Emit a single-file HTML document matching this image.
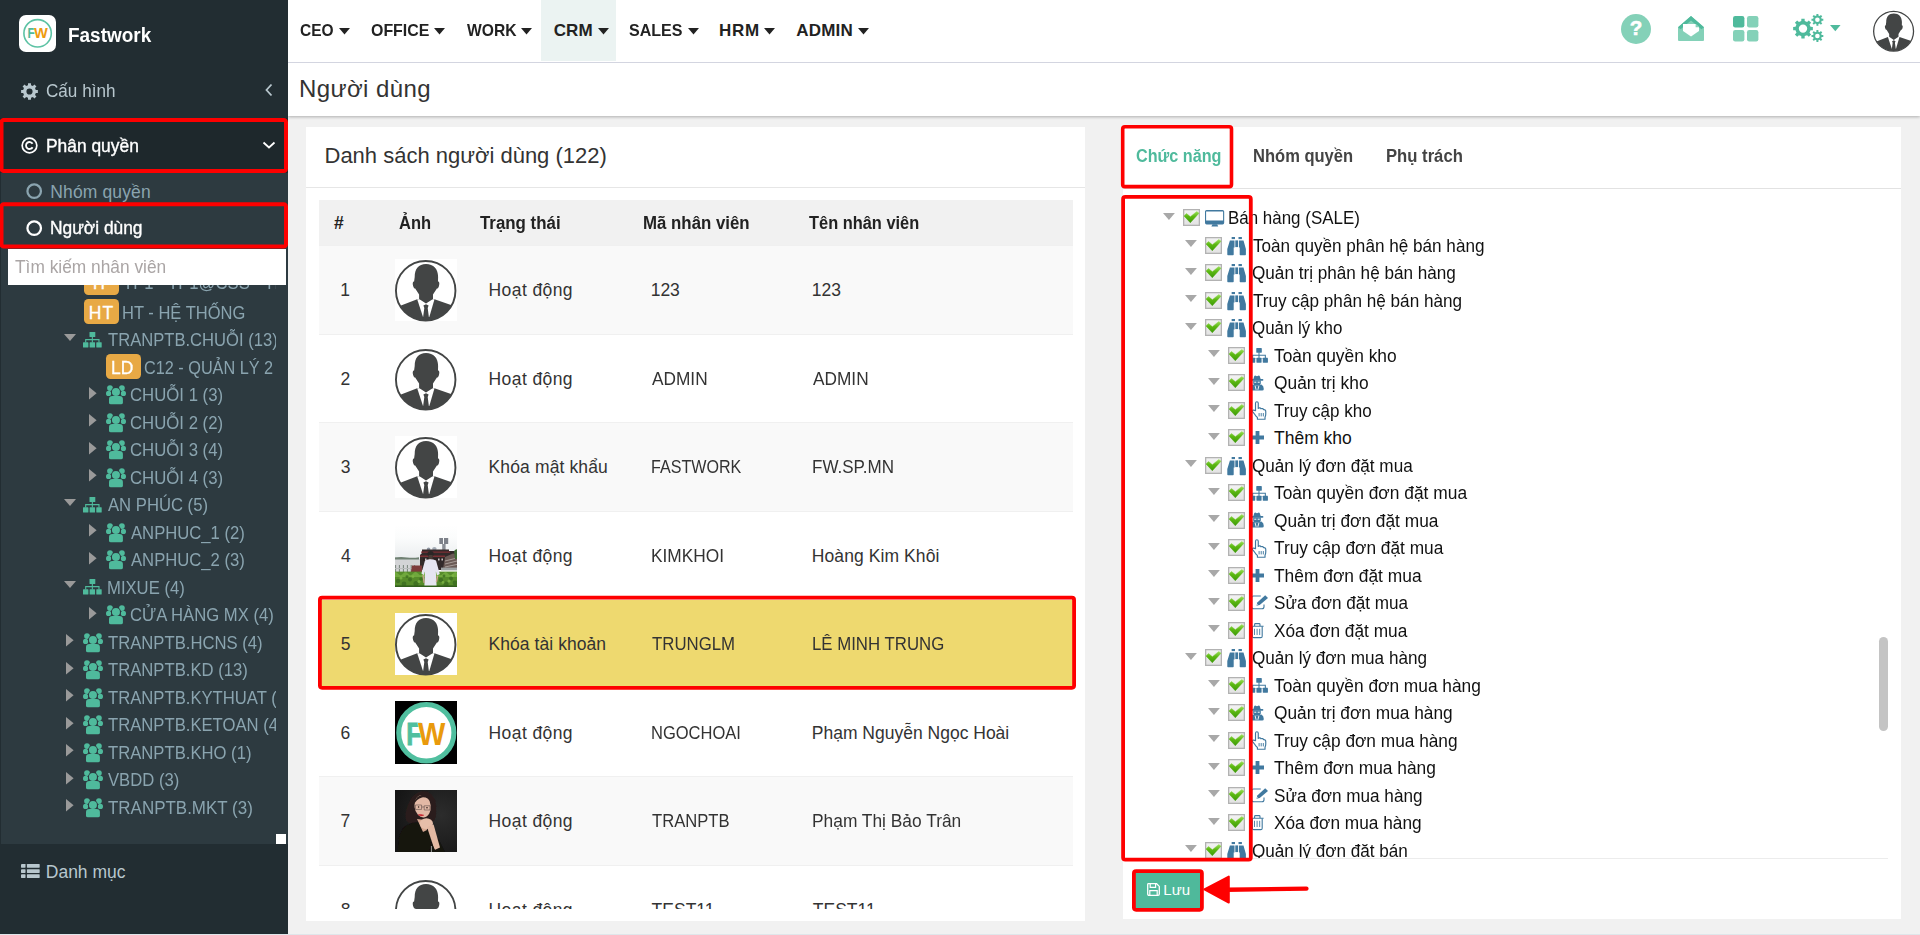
<!DOCTYPE html>
<html lang="vi"><head><meta charset="utf-8"><title>Người dùng</title>
<style>
html,body{margin:0;padding:0}
body{width:1920px;height:935px;overflow:hidden;position:relative;background:#f1f1f1;font-family:"Liberation Sans",sans-serif;font-size:17.5px;color:#333}
.t{position:absolute;white-space:nowrap;line-height:1;display:block}
.b{position:absolute;display:block}
svg{display:block;overflow:visible}
.badge{position:absolute;width:35px;height:25px;border-radius:4.5px;background:#e8a945}
.clip{position:absolute;overflow:hidden}
</style></head><body>

<div class="b" style="left:288px;top:62px;width:1632px;height:54px;background:#fff;box-shadow:0 1px 3px rgba(0,0,0,.28)"></div>
<div class="b" style="left:288px;top:0;width:1632px;height:62px;background:#fff"></div>
<div class="b" style="left:288px;top:62px;width:1632px;height:1px;background:#d3d5e0"></div>
<div class="b" style="left:541px;top:0;width:75px;height:61px;background:#ebf3f2"></div>
<div class="b" style="left:0;top:933.5px;width:1920px;height:2px;background:#dfe6ea"></div>
<span class="t" style="left:300.36px;top:22px;font-size:17px;font-weight:700;color:#222;transform:scaleX(0.9115);transform-origin:0 0;">CEO</span>
<svg style="position:absolute;left:338.8px;top:27.6px;" width="11" height="6.4" viewBox="0 0 11 6.4"><path d="M0,0 H11 L5.5,6.4Z" fill="#222"/></svg>
<span class="t" style="left:371.05px;top:22px;font-size:17px;font-weight:700;color:#222;transform:scaleX(0.9363);transform-origin:0 0;">OFFICE</span>
<svg style="position:absolute;left:433.8px;top:27.6px;" width="11" height="6.4" viewBox="0 0 11 6.4"><path d="M0,0 H11 L5.5,6.4Z" fill="#222"/></svg>
<span class="t" style="left:466.98px;top:22px;font-size:17px;font-weight:700;color:#222;transform:scaleX(0.9188);transform-origin:0 0;">WORK</span>
<svg style="position:absolute;left:521.3px;top:27.6px;" width="11" height="6.4" viewBox="0 0 11 6.4"><path d="M0,0 H11 L5.5,6.4Z" fill="#222"/></svg>
<span class="t" style="left:553.70px;top:22px;font-size:17px;font-weight:700;color:#222;letter-spacing:0.150px;">CRM</span>
<svg style="position:absolute;left:598px;top:27.6px;" width="11" height="6.4" viewBox="0 0 11 6.4"><path d="M0,0 H11 L5.5,6.4Z" fill="#222"/></svg>
<span class="t" style="left:629.15px;top:22px;font-size:17px;font-weight:700;color:#222;transform:scaleX(0.9433);transform-origin:0 0;">SALES</span>
<svg style="position:absolute;left:687.6px;top:27.6px;" width="11" height="6.4" viewBox="0 0 11 6.4"><path d="M0,0 H11 L5.5,6.4Z" fill="#222"/></svg>
<span class="t" style="left:718.98px;top:22px;font-size:17px;font-weight:700;color:#222;letter-spacing:0.763px;">HRM</span>
<svg style="position:absolute;left:763.7px;top:27.6px;" width="11" height="6.4" viewBox="0 0 11 6.4"><path d="M0,0 H11 L5.5,6.4Z" fill="#222"/></svg>
<span class="t" style="left:796.29px;top:22px;font-size:17px;font-weight:700;color:#222;letter-spacing:0.208px;">ADMIN</span>
<svg style="position:absolute;left:857.6px;top:27.6px;" width="11" height="6.4" viewBox="0 0 11 6.4"><path d="M0,0 H11 L5.5,6.4Z" fill="#222"/></svg>
<svg style="position:absolute;left:1621px;top:14px;" width="30" height="30" viewBox="0 0 30 30"><circle cx="15" cy="15" r="15" fill="#84d1b8"/><text x="15" y="20.6" text-anchor="middle" font-family="Liberation Sans, sans-serif" font-weight="700" font-size="20.5" stroke="#fff" stroke-width="0.6" fill="#fff">?</text></svg>
<svg style="position:absolute;left:1678px;top:16px;" width="26" height="25" viewBox="0 0 26 25"><path d="M0,11.2 L13,0 L26,11.2 V24 Q26,25 25,25 H1 Q0,25 0,24Z" fill="#84d1b8"/><path d="M0,11.2 L13,0 L26,11.2 L23.4,13.2 L13,4.6 L2.6,13.2Z" fill="#4fba9c"/><path d="M5,8 H17.6 L21,11.2 V15 L13,20.6 L5,15Z" fill="#fff"/><path d="M17.6,8 V11.2 H21Z" fill="#84d1b8"/></svg>
<svg style="position:absolute;left:1733px;top:16px;" width="25.4" height="25.4" viewBox="0 0 25.4 25.4"><rect x="0" y="0" width="11.4" height="11.4" rx="2.2" fill="#4fba9c"/><rect x="14" y="0" width="11.4" height="11.4" rx="2.2" fill="#84d1b8"/><rect x="0" y="14" width="11.4" height="11.4" rx="2.2" fill="#84d1b8"/><rect x="14" y="14" width="11.4" height="11.4" rx="2.2" fill="#84d1b8"/></svg>
<svg style="position:absolute;left:1792.5px;top:14px;" width="31" height="28" viewBox="0 0 31 28"><path d="M17.50,12.86 L19.86,12.96 L19.86,16.24 L17.50,16.34 L16.53,18.67 L18.14,20.41 L15.81,22.74 L14.07,21.13 L11.74,22.10 L11.64,24.46 L8.36,24.46 L8.26,22.10 L5.93,21.13 L4.19,22.74 L1.86,20.41 L3.47,18.67 L2.50,16.34 L0.14,16.24 L0.14,12.96 L2.50,12.86 L3.47,10.53 L1.86,8.79 L4.19,6.46 L5.93,8.07 L8.26,7.10 L8.36,4.74 L11.64,4.74 L11.74,7.10 L14.07,8.07 L15.81,6.46 L18.14,8.79 L16.53,10.53Z M5.80,14.60 a4.20,4.20 0 1,0 8.40,0 a4.20,4.20 0 1,0 -8.40,0Z M28.69,4.81 L30.32,4.81 L30.32,6.79 L28.69,6.79 L28.13,8.13 L29.28,9.29 L27.89,10.68 L26.73,9.53 L25.39,10.09 L25.39,11.72 L23.41,11.72 L23.41,10.09 L22.07,9.53 L20.91,10.68 L19.52,9.29 L20.67,8.13 L20.11,6.79 L18.48,6.79 L18.48,4.81 L20.11,4.81 L20.67,3.47 L19.52,2.31 L20.91,0.92 L22.07,2.07 L23.41,1.51 L23.41,-0.12 L25.39,-0.12 L25.39,1.51 L26.73,2.07 L27.89,0.92 L29.28,2.31 L28.13,3.47Z M22.10,5.80 a2.30,2.30 0 1,0 4.60,0 a2.30,2.30 0 1,0 -4.60,0Z M28.69,21.01 L30.32,21.01 L30.32,22.99 L28.69,22.99 L28.13,24.33 L29.28,25.49 L27.89,26.88 L26.73,25.73 L25.39,26.29 L25.39,27.92 L23.41,27.92 L23.41,26.29 L22.07,25.73 L20.91,26.88 L19.52,25.49 L20.67,24.33 L20.11,22.99 L18.48,22.99 L18.48,21.01 L20.11,21.01 L20.67,19.67 L19.52,18.51 L20.91,17.12 L22.07,18.27 L23.41,17.71 L23.41,16.08 L25.39,16.08 L25.39,17.71 L26.73,18.27 L27.89,17.12 L29.28,18.51 L28.13,19.67Z M22.10,22.00 a2.30,2.30 0 1,0 4.60,0 a2.30,2.30 0 1,0 -4.60,0Z" fill="#4fba9c" fill-rule="evenodd"/></svg>
<svg style="position:absolute;left:1829.7px;top:24.7px;" width="10.6" height="6.2" viewBox="0 0 10.6 6.2"><path d="M0,0 H10.6 L5.3,6.2Z" fill="#4fba9c"/></svg>
<svg style="position:absolute;left:1873px;top:10px;" width="41.6" height="41.6" viewBox="0 0 62 62"><defs><clipPath id="avh"><circle cx="30.7" cy="31.7" r="29.6"/></clipPath></defs><g clip-path="url(#avh)"><path d="M22.2,40.3 L6,46.4 L-2,52 L-2,66 L66,66 L66,52 L56,46.0 L39.5,40.3Z" fill="#434545"/><path d="M22.2,40.2 L28,57.9 L34.3,57.9 L39.5,40.2Z" fill="#fff"/><path d="M31,5.1 C38.5,5.1 43.1,10 43.1,18 L43,22.6 C44.6,22.6 44.6,25.2 43.9,27.2 C43.4,28.8 42.8,29.6 41.9,29.6 L38,35.6 L38,39.9 L31,44.6 L24.1,39.9 L24.1,35.6 L20.2,29.6 C19.3,29.6 18.7,28.8 18.2,27.2 C17.5,25.2 17.5,22.6 19.1,22.6 L19.7,18 C19.7,10 23.5,5.1 31,5.1Z" fill="#434545"/><path d="M28.4,46.4 L31,45.2 L33.6,46.4 L32.7,48.9 L33.9,58.2 L28.1,58.2 L29.3,48.9Z" fill="#434545"/></g><circle cx="30.7" cy="31.7" r="29.75" fill="none" stroke="#434545" stroke-width="1.9"/></svg>
<span class="t" style="left:299.03px;top:77px;font-size:24px;font-weight:400;color:#333;letter-spacing:0.404px;">Người dùng</span>
<div class="b" style="left:0;top:0;width:288px;height:933.5px;background:#222d32"></div>
<div class="b" style="left:19px;top:15px;width:37px;height:37px;border-radius:7px;background:#fff"></div>
<svg style="position:absolute;left:19px;top:15px;" width="37" height="37" viewBox="0 0 37 37"><circle cx="18.6" cy="18.3" r="13.7" fill="none" stroke="#5cc2a4" stroke-width="1.6"/><text x="8.6" y="23.4" font-family="Liberation Sans, sans-serif" font-weight="700" font-size="15" fill="#4fba9c" textLength="7.4" lengthAdjust="spacingAndGlyphs">F</text><text x="15.1" y="23.4" font-family="Liberation Sans, sans-serif" font-weight="700" font-size="15" fill="#ee9b0f" stroke="#fff" stroke-width="0.9" paint-order="stroke" textLength="13.8" lengthAdjust="spacingAndGlyphs">W</text></svg>
<span class="t" style="left:67.75px;top:25px;font-size:20px;font-weight:700;color:#fff;transform:scaleX(0.9477);transform-origin:0 0;">Fastwork</span>
<svg style="position:absolute;left:21px;top:82.6px;" width="17" height="17" viewBox="0 0 16 16"><path d="M13.93,6.58 L15.88,6.63 L15.88,9.37 L13.93,9.42 L13.20,11.19 L14.54,12.61 L12.61,14.54 L11.19,13.20 L9.42,13.93 L9.37,15.88 L6.63,15.88 L6.58,13.93 L4.81,13.20 L3.39,14.54 L1.46,12.61 L2.80,11.19 L2.07,9.42 L0.12,9.37 L0.12,6.63 L2.07,6.58 L2.80,4.81 L1.46,3.39 L3.39,1.46 L4.81,2.80 L6.58,2.07 L6.63,0.12 L9.37,0.12 L9.42,2.07 L11.19,2.80 L12.61,1.46 L14.54,3.39 L13.20,4.81Z M5.10,8.00 a2.90,2.90 0 1,0 5.80,0 a2.90,2.90 0 1,0 -5.80,0Z" fill="#b8c7ce" fill-rule="evenodd"/></svg>
<span class="t" style="left:46.14px;top:83px;font-size:17.5px;font-weight:400;color:#b8c7ce;transform:scaleX(0.9778);transform-origin:0 0;">Cấu hình</span>
<svg style="position:absolute;left:264.5px;top:82.6px;" width="8" height="14" viewBox="0 0 8 14"><path d="M6.5,1.5 L1.5,7 L6.5,12.5" fill="none" stroke="#b8c7ce" stroke-width="1.8"/></svg>
<div class="b" style="left:0;top:118px;width:288px;height:55px;background:#1e282c"></div>
<svg style="position:absolute;left:21px;top:137.4px;" width="17" height="17" viewBox="0 0 16 16"><circle cx="8" cy="8" r="6.9" fill="none" stroke="#fff" stroke-width="1.6"/><path d="M10.9,9.6 A3.3,3.3 0 1 1 10.9,6.4" fill="none" stroke="#fff" stroke-width="1.7"/></svg>
<span class="t" style="left:45.57px;top:138px;font-size:17.5px;font-weight:400;color:#fff;transform:scaleX(0.9938);transform-origin:0 0;-webkit-text-stroke:0.35px #fff;">Phân quyền</span>
<svg style="position:absolute;left:262px;top:141px;" width="14" height="8" viewBox="0 0 14 8"><path d="M1.5,1.5 L7,6.5 L12.5,1.5" fill="none" stroke="#fff" stroke-width="1.8"/></svg>
<div class="b" style="left:1px;top:172.7px;width:287px;height:671px;background:#2d3a40"></div>
<svg style="position:absolute;left:26px;top:183.4px;" width="16.4" height="16.4" viewBox="0 0 16 16"><circle cx="8" cy="8" r="6.6" fill="none" stroke="#8aa4af" stroke-width="2.2"/></svg>
<span class="t" style="left:50.27px;top:184px;font-size:17.5px;font-weight:400;color:#8aa4af;letter-spacing:0.125px;">Nhóm quyền</span>
<svg style="position:absolute;left:26px;top:220.2px;" width="16.4" height="16.4" viewBox="0 0 16 16"><circle cx="8" cy="8" r="6.6" fill="none" stroke="#fff" stroke-width="2.2"/></svg>
<span class="t" style="left:50.28px;top:220px;font-size:17.5px;font-weight:400;color:#fff;transform:scaleX(0.9924);transform-origin:0 0;-webkit-text-stroke:0.35px #fff;">Người dùng</span>
<div class="clip" style="left:1px;top:284px;width:274.6px;height:559.7px">
<div class="badge" style="left:82.8px;top:-14.2px"></div><span class="t" style="left:88.82px;top:-9px;font-size:17.5px;font-weight:400;color:#fff;-webkit-text-stroke:0.3px #fff;">TP</span>
<span class="t" style="left:121.63px;top:-9px;font-size:17.5px;font-weight:400;color:#8aa4af;transform:scaleX(0.9520);transform-origin:0 0;">TP1 - TP1@CSS - TH</span>
<div class="badge" style="left:82.8px;top:15.1px"></div><span class="t" style="left:87.77px;top:21px;font-size:17.5px;font-weight:400;color:#fff;letter-spacing:1.107px;-webkit-text-stroke:0.3px #fff;">HT</span>
<span class="t" style="left:120.65px;top:21px;font-size:17.5px;font-weight:400;color:#8aa4af;transform:scaleX(0.9438);transform-origin:0 0;">HT - HỆ THỐNG</span>
<svg style="position:absolute;left:63.2px;top:49.89999999999998px;" width="12" height="7" viewBox="0 0 12 7"><path d="M0,0 H12 L6.0,7Z" fill="#9a9a9a"/></svg>
<svg style="position:absolute;left:82.3px;top:47.89999999999998px;" width="18.7" height="15.5" viewBox="0 0 18.7 15.5"><rect x="6.5" y="0" width="5.8" height="4.9" rx="0.5" fill="#4fba9c"/><rect x="0" y="10.3" width="5.4" height="5.2" rx="0.5" fill="#4fba9c"/><rect x="6.65" y="10.3" width="5.4" height="5.2" rx="0.5" fill="#4fba9c"/><rect x="13.3" y="10.3" width="5.4" height="5.2" rx="0.5" fill="#4fba9c"/><path d="M9.35,4.5 V10.6 M2.7,10.6 V7.6 H16 V10.6" fill="none" stroke="#4fba9c" stroke-width="1.1"/></svg>
<span class="t" style="left:106.93px;top:48px;font-size:17.5px;font-weight:400;color:#8aa4af;transform:scaleX(0.9485);transform-origin:0 0;">TRANPTB.CHUỖI (13)</span>
<div class="badge" style="left:104.8px;top:70.1px"></div><span class="t" style="left:109.77px;top:76px;font-size:17.5px;font-weight:400;color:#fff;transform:scaleX(0.9943);transform-origin:0 0;-webkit-text-stroke:0.3px #fff;">LD</span>
<span class="t" style="left:143.49px;top:76px;font-size:17.5px;font-weight:400;color:#8aa4af;transform:scaleX(0.9285);transform-origin:0 0;">C12 - QUẢN LÝ 2</span>
<svg style="position:absolute;left:87.6px;top:102.59999999999997px;" width="7.6" height="12.4" viewBox="0 0 7.6 12.4"><path d="M0,0 L7.6,6.2 L0,12.4Z" fill="#9a9a9a"/></svg>
<svg style="position:absolute;left:104.8px;top:101.0px;" width="20" height="19.3" viewBox="0 0 20 19.3"><circle cx="4" cy="3.1" r="2.9" fill="#4fba9c"/><circle cx="15.9" cy="3.1" r="2.9" fill="#4fba9c"/><circle cx="2.6" cy="8.4" r="2.6" fill="#4fba9c"/><circle cx="17.4" cy="8.4" r="2.6" fill="#4fba9c"/><circle cx="9.95" cy="7" r="4.9" fill="#2d3a40"/><circle cx="9.95" cy="7" r="4" fill="#4fba9c"/><path d="M3,17.4 V14 Q3,10.9 6.4,10.9 H13.5 Q16.9,10.9 16.9,14 V17.4 Q16.9,19.3 15,19.3 H4.9 Q3,19.3 3,17.4Z" fill="#4fba9c" stroke="#2d3a40" stroke-width="0.0"/></svg>
<span class="t" style="left:128.96px;top:103px;font-size:17.5px;font-weight:400;color:#8aa4af;transform:scaleX(0.9572);transform-origin:0 0;">CHUỖI 1 (3)</span>
<svg style="position:absolute;left:87.6px;top:130.09999999999997px;" width="7.6" height="12.4" viewBox="0 0 7.6 12.4"><path d="M0,0 L7.6,6.2 L0,12.4Z" fill="#9a9a9a"/></svg>
<svg style="position:absolute;left:104.8px;top:128.5px;" width="20" height="19.3" viewBox="0 0 20 19.3"><circle cx="4" cy="3.1" r="2.9" fill="#4fba9c"/><circle cx="15.9" cy="3.1" r="2.9" fill="#4fba9c"/><circle cx="2.6" cy="8.4" r="2.6" fill="#4fba9c"/><circle cx="17.4" cy="8.4" r="2.6" fill="#4fba9c"/><circle cx="9.95" cy="7" r="4.9" fill="#2d3a40"/><circle cx="9.95" cy="7" r="4" fill="#4fba9c"/><path d="M3,17.4 V14 Q3,10.9 6.4,10.9 H13.5 Q16.9,10.9 16.9,14 V17.4 Q16.9,19.3 15,19.3 H4.9 Q3,19.3 3,17.4Z" fill="#4fba9c" stroke="#2d3a40" stroke-width="0.0"/></svg>
<span class="t" style="left:128.96px;top:131px;font-size:17.5px;font-weight:400;color:#8aa4af;transform:scaleX(0.9572);transform-origin:0 0;">CHUỖI 2 (2)</span>
<svg style="position:absolute;left:87.6px;top:157.59999999999997px;" width="7.6" height="12.4" viewBox="0 0 7.6 12.4"><path d="M0,0 L7.6,6.2 L0,12.4Z" fill="#9a9a9a"/></svg>
<svg style="position:absolute;left:104.8px;top:156.0px;" width="20" height="19.3" viewBox="0 0 20 19.3"><circle cx="4" cy="3.1" r="2.9" fill="#4fba9c"/><circle cx="15.9" cy="3.1" r="2.9" fill="#4fba9c"/><circle cx="2.6" cy="8.4" r="2.6" fill="#4fba9c"/><circle cx="17.4" cy="8.4" r="2.6" fill="#4fba9c"/><circle cx="9.95" cy="7" r="4.9" fill="#2d3a40"/><circle cx="9.95" cy="7" r="4" fill="#4fba9c"/><path d="M3,17.4 V14 Q3,10.9 6.4,10.9 H13.5 Q16.9,10.9 16.9,14 V17.4 Q16.9,19.3 15,19.3 H4.9 Q3,19.3 3,17.4Z" fill="#4fba9c" stroke="#2d3a40" stroke-width="0.0"/></svg>
<span class="t" style="left:128.96px;top:158px;font-size:17.5px;font-weight:400;color:#8aa4af;transform:scaleX(0.9572);transform-origin:0 0;">CHUỖI 3 (4)</span>
<svg style="position:absolute;left:87.6px;top:185.09999999999997px;" width="7.6" height="12.4" viewBox="0 0 7.6 12.4"><path d="M0,0 L7.6,6.2 L0,12.4Z" fill="#9a9a9a"/></svg>
<svg style="position:absolute;left:104.8px;top:183.5px;" width="20" height="19.3" viewBox="0 0 20 19.3"><circle cx="4" cy="3.1" r="2.9" fill="#4fba9c"/><circle cx="15.9" cy="3.1" r="2.9" fill="#4fba9c"/><circle cx="2.6" cy="8.4" r="2.6" fill="#4fba9c"/><circle cx="17.4" cy="8.4" r="2.6" fill="#4fba9c"/><circle cx="9.95" cy="7" r="4.9" fill="#2d3a40"/><circle cx="9.95" cy="7" r="4" fill="#4fba9c"/><path d="M3,17.4 V14 Q3,10.9 6.4,10.9 H13.5 Q16.9,10.9 16.9,14 V17.4 Q16.9,19.3 15,19.3 H4.9 Q3,19.3 3,17.4Z" fill="#4fba9c" stroke="#2d3a40" stroke-width="0.0"/></svg>
<span class="t" style="left:128.96px;top:186px;font-size:17.5px;font-weight:400;color:#8aa4af;transform:scaleX(0.9572);transform-origin:0 0;">CHUỖI 4 (3)</span>
<svg style="position:absolute;left:63.2px;top:214.89999999999998px;" width="12" height="7" viewBox="0 0 12 7"><path d="M0,0 H12 L6.0,7Z" fill="#9a9a9a"/></svg>
<svg style="position:absolute;left:82.3px;top:212.89999999999998px;" width="18.7" height="15.5" viewBox="0 0 18.7 15.5"><rect x="6.5" y="0" width="5.8" height="4.9" rx="0.5" fill="#4fba9c"/><rect x="0" y="10.3" width="5.4" height="5.2" rx="0.5" fill="#4fba9c"/><rect x="6.65" y="10.3" width="5.4" height="5.2" rx="0.5" fill="#4fba9c"/><rect x="13.3" y="10.3" width="5.4" height="5.2" rx="0.5" fill="#4fba9c"/><path d="M9.35,4.5 V10.6 M2.7,10.6 V7.6 H16 V10.6" fill="none" stroke="#4fba9c" stroke-width="1.1"/></svg>
<span class="t" style="left:107.27px;top:213px;font-size:17.5px;font-weight:400;color:#8aa4af;transform:scaleX(0.9520);transform-origin:0 0;">AN PHÚC (5)</span>
<svg style="position:absolute;left:87.6px;top:240.10000000000002px;" width="7.6" height="12.4" viewBox="0 0 7.6 12.4"><path d="M0,0 L7.6,6.2 L0,12.4Z" fill="#9a9a9a"/></svg>
<svg style="position:absolute;left:104.8px;top:238.5px;" width="20" height="19.3" viewBox="0 0 20 19.3"><circle cx="4" cy="3.1" r="2.9" fill="#4fba9c"/><circle cx="15.9" cy="3.1" r="2.9" fill="#4fba9c"/><circle cx="2.6" cy="8.4" r="2.6" fill="#4fba9c"/><circle cx="17.4" cy="8.4" r="2.6" fill="#4fba9c"/><circle cx="9.95" cy="7" r="4.9" fill="#2d3a40"/><circle cx="9.95" cy="7" r="4" fill="#4fba9c"/><path d="M3,17.4 V14 Q3,10.9 6.4,10.9 H13.5 Q16.9,10.9 16.9,14 V17.4 Q16.9,19.3 15,19.3 H4.9 Q3,19.3 3,17.4Z" fill="#4fba9c" stroke="#2d3a40" stroke-width="0.0"/></svg>
<span class="t" style="left:129.77px;top:241px;font-size:17.5px;font-weight:400;color:#8aa4af;transform:scaleX(0.9520);transform-origin:0 0;">ANPHUC_1 (2)</span>
<svg style="position:absolute;left:87.6px;top:267.6px;" width="7.6" height="12.4" viewBox="0 0 7.6 12.4"><path d="M0,0 L7.6,6.2 L0,12.4Z" fill="#9a9a9a"/></svg>
<svg style="position:absolute;left:104.8px;top:266.0px;" width="20" height="19.3" viewBox="0 0 20 19.3"><circle cx="4" cy="3.1" r="2.9" fill="#4fba9c"/><circle cx="15.9" cy="3.1" r="2.9" fill="#4fba9c"/><circle cx="2.6" cy="8.4" r="2.6" fill="#4fba9c"/><circle cx="17.4" cy="8.4" r="2.6" fill="#4fba9c"/><circle cx="9.95" cy="7" r="4.9" fill="#2d3a40"/><circle cx="9.95" cy="7" r="4" fill="#4fba9c"/><path d="M3,17.4 V14 Q3,10.9 6.4,10.9 H13.5 Q16.9,10.9 16.9,14 V17.4 Q16.9,19.3 15,19.3 H4.9 Q3,19.3 3,17.4Z" fill="#4fba9c" stroke="#2d3a40" stroke-width="0.0"/></svg>
<span class="t" style="left:129.77px;top:268px;font-size:17.5px;font-weight:400;color:#8aa4af;transform:scaleX(0.9520);transform-origin:0 0;">ANPHUC_2 (3)</span>
<svg style="position:absolute;left:63.2px;top:297.4000000000001px;" width="12" height="7" viewBox="0 0 12 7"><path d="M0,0 H12 L6.0,7Z" fill="#9a9a9a"/></svg>
<svg style="position:absolute;left:82.3px;top:295.4000000000001px;" width="18.7" height="15.5" viewBox="0 0 18.7 15.5"><rect x="6.5" y="0" width="5.8" height="4.9" rx="0.5" fill="#4fba9c"/><rect x="0" y="10.3" width="5.4" height="5.2" rx="0.5" fill="#4fba9c"/><rect x="6.65" y="10.3" width="5.4" height="5.2" rx="0.5" fill="#4fba9c"/><rect x="13.3" y="10.3" width="5.4" height="5.2" rx="0.5" fill="#4fba9c"/><path d="M9.35,4.5 V10.6 M2.7,10.6 V7.6 H16 V10.6" fill="none" stroke="#4fba9c" stroke-width="1.1"/></svg>
<span class="t" style="left:105.93px;top:296px;font-size:17.5px;font-weight:400;color:#8aa4af;transform:scaleX(0.9520);transform-origin:0 0;">MIXUE (4)</span>
<svg style="position:absolute;left:87.6px;top:322.6px;" width="7.6" height="12.4" viewBox="0 0 7.6 12.4"><path d="M0,0 L7.6,6.2 L0,12.4Z" fill="#9a9a9a"/></svg>
<svg style="position:absolute;left:104.8px;top:321.0px;" width="20" height="19.3" viewBox="0 0 20 19.3"><circle cx="4" cy="3.1" r="2.9" fill="#4fba9c"/><circle cx="15.9" cy="3.1" r="2.9" fill="#4fba9c"/><circle cx="2.6" cy="8.4" r="2.6" fill="#4fba9c"/><circle cx="17.4" cy="8.4" r="2.6" fill="#4fba9c"/><circle cx="9.95" cy="7" r="4.9" fill="#2d3a40"/><circle cx="9.95" cy="7" r="4" fill="#4fba9c"/><path d="M3,17.4 V14 Q3,10.9 6.4,10.9 H13.5 Q16.9,10.9 16.9,14 V17.4 Q16.9,19.3 15,19.3 H4.9 Q3,19.3 3,17.4Z" fill="#4fba9c" stroke="#2d3a40" stroke-width="0.0"/></svg>
<span class="t" style="left:128.97px;top:323px;font-size:17.5px;font-weight:400;color:#8aa4af;transform:scaleX(0.9520);transform-origin:0 0;">CỬA HÀNG MX (4)</span>
<svg style="position:absolute;left:65.1px;top:350.1px;" width="7.6" height="12.4" viewBox="0 0 7.6 12.4"><path d="M0,0 L7.6,6.2 L0,12.4Z" fill="#9a9a9a"/></svg>
<svg style="position:absolute;left:82.3px;top:348.5px;" width="20" height="19.3" viewBox="0 0 20 19.3"><circle cx="4" cy="3.1" r="2.9" fill="#4fba9c"/><circle cx="15.9" cy="3.1" r="2.9" fill="#4fba9c"/><circle cx="2.6" cy="8.4" r="2.6" fill="#4fba9c"/><circle cx="17.4" cy="8.4" r="2.6" fill="#4fba9c"/><circle cx="9.95" cy="7" r="4.9" fill="#2d3a40"/><circle cx="9.95" cy="7" r="4" fill="#4fba9c"/><path d="M3,17.4 V14 Q3,10.9 6.4,10.9 H13.5 Q16.9,10.9 16.9,14 V17.4 Q16.9,19.3 15,19.3 H4.9 Q3,19.3 3,17.4Z" fill="#4fba9c" stroke="#2d3a40" stroke-width="0.0"/></svg>
<span class="t" style="left:106.93px;top:351px;font-size:17.5px;font-weight:400;color:#8aa4af;transform:scaleX(0.9520);transform-origin:0 0;">TRANPTB.HCNS (4)</span>
<svg style="position:absolute;left:65.1px;top:377.6px;" width="7.6" height="12.4" viewBox="0 0 7.6 12.4"><path d="M0,0 L7.6,6.2 L0,12.4Z" fill="#9a9a9a"/></svg>
<svg style="position:absolute;left:82.3px;top:376.0px;" width="20" height="19.3" viewBox="0 0 20 19.3"><circle cx="4" cy="3.1" r="2.9" fill="#4fba9c"/><circle cx="15.9" cy="3.1" r="2.9" fill="#4fba9c"/><circle cx="2.6" cy="8.4" r="2.6" fill="#4fba9c"/><circle cx="17.4" cy="8.4" r="2.6" fill="#4fba9c"/><circle cx="9.95" cy="7" r="4.9" fill="#2d3a40"/><circle cx="9.95" cy="7" r="4" fill="#4fba9c"/><path d="M3,17.4 V14 Q3,10.9 6.4,10.9 H13.5 Q16.9,10.9 16.9,14 V17.4 Q16.9,19.3 15,19.3 H4.9 Q3,19.3 3,17.4Z" fill="#4fba9c" stroke="#2d3a40" stroke-width="0.0"/></svg>
<span class="t" style="left:106.93px;top:378px;font-size:17.5px;font-weight:400;color:#8aa4af;transform:scaleX(0.9520);transform-origin:0 0;">TRANPTB.KD (13)</span>
<svg style="position:absolute;left:65.1px;top:405.1px;" width="7.6" height="12.4" viewBox="0 0 7.6 12.4"><path d="M0,0 L7.6,6.2 L0,12.4Z" fill="#9a9a9a"/></svg>
<svg style="position:absolute;left:82.3px;top:403.5px;" width="20" height="19.3" viewBox="0 0 20 19.3"><circle cx="4" cy="3.1" r="2.9" fill="#4fba9c"/><circle cx="15.9" cy="3.1" r="2.9" fill="#4fba9c"/><circle cx="2.6" cy="8.4" r="2.6" fill="#4fba9c"/><circle cx="17.4" cy="8.4" r="2.6" fill="#4fba9c"/><circle cx="9.95" cy="7" r="4.9" fill="#2d3a40"/><circle cx="9.95" cy="7" r="4" fill="#4fba9c"/><path d="M3,17.4 V14 Q3,10.9 6.4,10.9 H13.5 Q16.9,10.9 16.9,14 V17.4 Q16.9,19.3 15,19.3 H4.9 Q3,19.3 3,17.4Z" fill="#4fba9c" stroke="#2d3a40" stroke-width="0.0"/></svg>
<span class="t" style="left:106.93px;top:406px;font-size:17.5px;font-weight:400;color:#8aa4af;transform:scaleX(0.9520);transform-origin:0 0;">TRANPTB.KYTHUAT (3)</span>
<svg style="position:absolute;left:65.1px;top:432.6px;" width="7.6" height="12.4" viewBox="0 0 7.6 12.4"><path d="M0,0 L7.6,6.2 L0,12.4Z" fill="#9a9a9a"/></svg>
<svg style="position:absolute;left:82.3px;top:431.0px;" width="20" height="19.3" viewBox="0 0 20 19.3"><circle cx="4" cy="3.1" r="2.9" fill="#4fba9c"/><circle cx="15.9" cy="3.1" r="2.9" fill="#4fba9c"/><circle cx="2.6" cy="8.4" r="2.6" fill="#4fba9c"/><circle cx="17.4" cy="8.4" r="2.6" fill="#4fba9c"/><circle cx="9.95" cy="7" r="4.9" fill="#2d3a40"/><circle cx="9.95" cy="7" r="4" fill="#4fba9c"/><path d="M3,17.4 V14 Q3,10.9 6.4,10.9 H13.5 Q16.9,10.9 16.9,14 V17.4 Q16.9,19.3 15,19.3 H4.9 Q3,19.3 3,17.4Z" fill="#4fba9c" stroke="#2d3a40" stroke-width="0.0"/></svg>
<span class="t" style="left:106.93px;top:433px;font-size:17.5px;font-weight:400;color:#8aa4af;transform:scaleX(0.9520);transform-origin:0 0;">TRANPTB.KETOAN (4)</span>
<svg style="position:absolute;left:65.1px;top:460.1px;" width="7.6" height="12.4" viewBox="0 0 7.6 12.4"><path d="M0,0 L7.6,6.2 L0,12.4Z" fill="#9a9a9a"/></svg>
<svg style="position:absolute;left:82.3px;top:458.5px;" width="20" height="19.3" viewBox="0 0 20 19.3"><circle cx="4" cy="3.1" r="2.9" fill="#4fba9c"/><circle cx="15.9" cy="3.1" r="2.9" fill="#4fba9c"/><circle cx="2.6" cy="8.4" r="2.6" fill="#4fba9c"/><circle cx="17.4" cy="8.4" r="2.6" fill="#4fba9c"/><circle cx="9.95" cy="7" r="4.9" fill="#2d3a40"/><circle cx="9.95" cy="7" r="4" fill="#4fba9c"/><path d="M3,17.4 V14 Q3,10.9 6.4,10.9 H13.5 Q16.9,10.9 16.9,14 V17.4 Q16.9,19.3 15,19.3 H4.9 Q3,19.3 3,17.4Z" fill="#4fba9c" stroke="#2d3a40" stroke-width="0.0"/></svg>
<span class="t" style="left:106.93px;top:461px;font-size:17.5px;font-weight:400;color:#8aa4af;transform:scaleX(0.9520);transform-origin:0 0;">TRANPTB.KHO (1)</span>
<svg style="position:absolute;left:65.1px;top:487.6px;" width="7.6" height="12.4" viewBox="0 0 7.6 12.4"><path d="M0,0 L7.6,6.2 L0,12.4Z" fill="#9a9a9a"/></svg>
<svg style="position:absolute;left:82.3px;top:486.0px;" width="20" height="19.3" viewBox="0 0 20 19.3"><circle cx="4" cy="3.1" r="2.9" fill="#4fba9c"/><circle cx="15.9" cy="3.1" r="2.9" fill="#4fba9c"/><circle cx="2.6" cy="8.4" r="2.6" fill="#4fba9c"/><circle cx="17.4" cy="8.4" r="2.6" fill="#4fba9c"/><circle cx="9.95" cy="7" r="4.9" fill="#2d3a40"/><circle cx="9.95" cy="7" r="4" fill="#4fba9c"/><path d="M3,17.4 V14 Q3,10.9 6.4,10.9 H13.5 Q16.9,10.9 16.9,14 V17.4 Q16.9,19.3 15,19.3 H4.9 Q3,19.3 3,17.4Z" fill="#4fba9c" stroke="#2d3a40" stroke-width="0.0"/></svg>
<span class="t" style="left:107.23px;top:488px;font-size:17.5px;font-weight:400;color:#8aa4af;transform:scaleX(0.9520);transform-origin:0 0;">VBDD (3)</span>
<svg style="position:absolute;left:65.1px;top:515.1px;" width="7.6" height="12.4" viewBox="0 0 7.6 12.4"><path d="M0,0 L7.6,6.2 L0,12.4Z" fill="#9a9a9a"/></svg>
<svg style="position:absolute;left:82.3px;top:513.5px;" width="20" height="19.3" viewBox="0 0 20 19.3"><circle cx="4" cy="3.1" r="2.9" fill="#4fba9c"/><circle cx="15.9" cy="3.1" r="2.9" fill="#4fba9c"/><circle cx="2.6" cy="8.4" r="2.6" fill="#4fba9c"/><circle cx="17.4" cy="8.4" r="2.6" fill="#4fba9c"/><circle cx="9.95" cy="7" r="4.9" fill="#2d3a40"/><circle cx="9.95" cy="7" r="4" fill="#4fba9c"/><path d="M3,17.4 V14 Q3,10.9 6.4,10.9 H13.5 Q16.9,10.9 16.9,14 V17.4 Q16.9,19.3 15,19.3 H4.9 Q3,19.3 3,17.4Z" fill="#4fba9c" stroke="#2d3a40" stroke-width="0.0"/></svg>
<span class="t" style="left:106.93px;top:516px;font-size:17.5px;font-weight:400;color:#8aa4af;transform:scaleX(0.9692);transform-origin:0 0;">TRANPTB.MKT (3)</span>
</div>
<div class="b" style="left:7.8px;top:248.6px;width:277.8px;height:36.1px;background:#fff"></div>
<span class="t" style="left:14.92px;top:259px;font-size:17.5px;font-weight:400;color:#aaa5a5;transform:scaleX(0.9901);transform-origin:0 0;">Tìm kiếm nhân viên</span>
<div class="b" style="left:276px;top:834px;width:10.2px;height:10px;background:#fff"></div>
<svg style="position:absolute;left:21.3px;top:863.8px;" width="18.7" height="14.2" viewBox="0 0 19 14.2"><rect x="0" y="0.0" width="4.6" height="3.8" rx="0.5" fill="#b8c7ce"/><rect x="6" y="0.0" width="13" height="3.8" rx="0.5" fill="#b8c7ce"/><rect x="0" y="5.2" width="4.6" height="3.8" rx="0.5" fill="#b8c7ce"/><rect x="6" y="5.2" width="13" height="3.8" rx="0.5" fill="#b8c7ce"/><rect x="0" y="10.4" width="4.6" height="3.8" rx="0.5" fill="#b8c7ce"/><rect x="6" y="10.4" width="13" height="3.8" rx="0.5" fill="#b8c7ce"/></svg>
<span class="t" style="left:45.77px;top:864px;font-size:17.5px;font-weight:400;color:#b8c7ce;">Danh mục</span>
<div class="b" style="left:306px;top:126.7px;width:779px;height:794px;background:#fff"></div>
<div class="b" style="left:306px;top:186.6px;width:779px;height:1.2px;background:#e6e6e6"></div>
<span class="t" style="left:324.50px;top:145px;font-size:22px;font-weight:400;color:#333;">Danh sách người dùng (122)</span>
<div class="b" style="left:319px;top:200px;width:754px;height:45px;background:#f1f1f1"></div>
<span class="t" style="left:334.00px;top:215px;font-size:17.5px;font-weight:700;color:#222;">#</span>
<span class="t" style="left:398.90px;top:215px;font-size:17.5px;font-weight:700;color:#222;transform:scaleX(0.9438);transform-origin:0 0;">Ảnh</span>
<span class="t" style="left:479.61px;top:215px;font-size:17.5px;font-weight:700;color:#222;transform:scaleX(0.9634);transform-origin:0 0;">Trạng thái</span>
<span class="t" style="left:643.29px;top:215px;font-size:17.5px;font-weight:700;color:#222;transform:scaleX(0.9621);transform-origin:0 0;">Mã nhân viên</span>
<span class="t" style="left:808.72px;top:215px;font-size:17.5px;font-weight:700;color:#222;transform:scaleX(0.9366);transform-origin:0 0;">Tên nhân viên</span>
<div class="clip" style="left:319px;top:245px;width:754px;height:663.7px">
<div class="b" style="left:0;top:0.0px;width:754px;height:88.5px;background:#f9f9f9;border-top:1px solid #f0f0f0;box-sizing:border-box"></div>
<span class="t" style="left:21.17px;top:37px;font-size:17.5px;font-weight:400;color:#333;">1</span>
<span class="t" style="left:169.56px;top:37px;font-size:17.5px;font-weight:400;color:#333;letter-spacing:0.412px;">Hoạt động</span>
<span class="t" style="left:331.67px;top:37px;font-size:17.5px;font-weight:400;color:#333;">123</span>
<span class="t" style="left:492.87px;top:37px;font-size:17.5px;font-weight:400;color:#333;">123</span>
<svg style="position:absolute;left:75.80000000000001px;top:14.0px;" width="62" height="62" viewBox="0 0 62 62"><rect width="62" height="62" fill="#fff"/><defs><clipPath id="avr0"><circle cx="30.7" cy="31.7" r="29.6"/></clipPath></defs><g clip-path="url(#avr0)"><path d="M22.2,40.3 L6,46.4 L-2,52 L-2,66 L66,66 L66,52 L56,46.0 L39.5,40.3Z" fill="#434545"/><path d="M22.2,40.2 L28,57.9 L34.3,57.9 L39.5,40.2Z" fill="#fff"/><path d="M31,5.1 C38.5,5.1 43.1,10 43.1,18 L43,22.6 C44.6,22.6 44.6,25.2 43.9,27.2 C43.4,28.8 42.8,29.6 41.9,29.6 L38,35.6 L38,39.9 L31,44.6 L24.1,39.9 L24.1,35.6 L20.2,29.6 C19.3,29.6 18.7,28.8 18.2,27.2 C17.5,25.2 17.5,22.6 19.1,22.6 L19.7,18 C19.7,10 23.5,5.1 31,5.1Z" fill="#434545"/><path d="M28.4,46.4 L31,45.2 L33.6,46.4 L32.7,48.9 L33.9,58.2 L28.1,58.2 L29.3,48.9Z" fill="#434545"/></g><circle cx="30.7" cy="31.7" r="29.75" fill="none" stroke="#434545" stroke-width="1.9"/></svg>
<div class="b" style="left:0;top:88.5px;width:754px;height:88.5px;background:#fff;border-top:1px solid #f0f0f0;box-sizing:border-box"></div>
<span class="t" style="left:21.62px;top:126px;font-size:17.5px;font-weight:400;color:#333;">2</span>
<span class="t" style="left:169.56px;top:126px;font-size:17.5px;font-weight:400;color:#333;letter-spacing:0.412px;">Hoạt động</span>
<span class="t" style="left:332.97px;top:126px;font-size:17.5px;font-weight:400;color:#333;transform:scaleX(0.9866);transform-origin:0 0;">ADMIN</span>
<span class="t" style="left:494.17px;top:126px;font-size:17.5px;font-weight:400;color:#333;transform:scaleX(0.9866);transform-origin:0 0;">ADMIN</span>
<svg style="position:absolute;left:75.80000000000001px;top:102.5px;" width="62" height="62" viewBox="0 0 62 62"><rect width="62" height="62" fill="#fff"/><defs><clipPath id="avr1"><circle cx="30.7" cy="31.7" r="29.6"/></clipPath></defs><g clip-path="url(#avr1)"><path d="M22.2,40.3 L6,46.4 L-2,52 L-2,66 L66,66 L66,52 L56,46.0 L39.5,40.3Z" fill="#434545"/><path d="M22.2,40.2 L28,57.9 L34.3,57.9 L39.5,40.2Z" fill="#fff"/><path d="M31,5.1 C38.5,5.1 43.1,10 43.1,18 L43,22.6 C44.6,22.6 44.6,25.2 43.9,27.2 C43.4,28.8 42.8,29.6 41.9,29.6 L38,35.6 L38,39.9 L31,44.6 L24.1,39.9 L24.1,35.6 L20.2,29.6 C19.3,29.6 18.7,28.8 18.2,27.2 C17.5,25.2 17.5,22.6 19.1,22.6 L19.7,18 C19.7,10 23.5,5.1 31,5.1Z" fill="#434545"/><path d="M28.4,46.4 L31,45.2 L33.6,46.4 L32.7,48.9 L33.9,58.2 L28.1,58.2 L29.3,48.9Z" fill="#434545"/></g><circle cx="30.7" cy="31.7" r="29.75" fill="none" stroke="#434545" stroke-width="1.9"/></svg>
<div class="b" style="left:0;top:177.0px;width:754px;height:88.5px;background:#f9f9f9;border-top:1px solid #f0f0f0;box-sizing:border-box"></div>
<span class="t" style="left:21.84px;top:214px;font-size:17.5px;font-weight:400;color:#333;">3</span>
<span class="t" style="left:169.56px;top:214px;font-size:17.5px;font-weight:400;color:#333;letter-spacing:0.131px;">Khóa mật khẩu</span>
<span class="t" style="left:331.68px;top:214px;font-size:17.5px;font-weight:400;color:#333;transform:scaleX(0.9195);transform-origin:0 0;">FASTWORK</span>
<span class="t" style="left:492.80px;top:214px;font-size:17.5px;font-weight:400;color:#333;transform:scaleX(0.9727);transform-origin:0 0;">FW.SP.MN</span>
<svg style="position:absolute;left:75.80000000000001px;top:191.0px;" width="62" height="62" viewBox="0 0 62 62"><rect width="62" height="62" fill="#fff"/><defs><clipPath id="avr2"><circle cx="30.7" cy="31.7" r="29.6"/></clipPath></defs><g clip-path="url(#avr2)"><path d="M22.2,40.3 L6,46.4 L-2,52 L-2,66 L66,66 L66,52 L56,46.0 L39.5,40.3Z" fill="#434545"/><path d="M22.2,40.2 L28,57.9 L34.3,57.9 L39.5,40.2Z" fill="#fff"/><path d="M31,5.1 C38.5,5.1 43.1,10 43.1,18 L43,22.6 C44.6,22.6 44.6,25.2 43.9,27.2 C43.4,28.8 42.8,29.6 41.9,29.6 L38,35.6 L38,39.9 L31,44.6 L24.1,39.9 L24.1,35.6 L20.2,29.6 C19.3,29.6 18.7,28.8 18.2,27.2 C17.5,25.2 17.5,22.6 19.1,22.6 L19.7,18 C19.7,10 23.5,5.1 31,5.1Z" fill="#434545"/><path d="M28.4,46.4 L31,45.2 L33.6,46.4 L32.7,48.9 L33.9,58.2 L28.1,58.2 L29.3,48.9Z" fill="#434545"/></g><circle cx="30.7" cy="31.7" r="29.75" fill="none" stroke="#434545" stroke-width="1.9"/></svg>
<div class="b" style="left:0;top:265.5px;width:754px;height:88.5px;background:#fff;border-top:1px solid #f0f0f0;box-sizing:border-box"></div>
<span class="t" style="left:22.11px;top:303px;font-size:17.5px;font-weight:400;color:#333;">4</span>
<span class="t" style="left:169.56px;top:303px;font-size:17.5px;font-weight:400;color:#333;letter-spacing:0.412px;">Hoạt động</span>
<span class="t" style="left:331.58px;top:303px;font-size:17.5px;font-weight:400;color:#333;transform:scaleX(0.9878);transform-origin:0 0;">KIMKHOI</span>
<span class="t" style="left:492.77px;top:303px;font-size:17.5px;font-weight:400;color:#333;letter-spacing:0.088px;">Hoàng Kim Khôi</span>
<svg style="position:absolute;left:75.80000000000001px;top:279.5px;" width="62" height="62" viewBox="0 0 62 62"><defs><linearGradient id="sky" x1="0" y1="0" x2="0" y2="1"><stop offset="0" stop-color="#ffffff"/><stop offset="0.35" stop-color="#fbfcfc"/><stop offset="1" stop-color="#e9ecee"/></linearGradient><filter id="bl4" x="-5%" y="-5%" width="110%" height="110%"><feGaussianBlur stdDeviation="0.55"/></filter><clipPath id="cp4"><rect width="62" height="62"/></clipPath></defs><g clip-path="url(#cp4)"><rect width="62" height="62" fill="#fff"/><g filter="url(#bl4)"><rect x="-2" y="0" width="66" height="36" fill="url(#sky)"/><rect x="-2" y="34" width="30" height="14" fill="#d3d4d6"/><path d="M-2,32.6 Q6,31.4 12,32.4 T24,32.2 V34.6 H-2Z" fill="#6f8173"/><path d="M0.6,40 V49 M4.4,40 V49 M8.4,40 V49 M12.4,40 V49 M16.2,40 V49 M19.6,40 V49" stroke="#6e7a70" stroke-width="0.9"/><path d="M0,43 H24 V44 H0Z" fill="#b9bcbc"/><path d="M44.3,13 H48 V19 H44.3Z M49,13 H53.2 V19 H49Z" fill="#7d8189"/><rect x="47.2" y="19" width="3.4" height="6" fill="#8a8e95"/><ellipse cx="33.6" cy="24" rx="1.8" ry="1.6" fill="#8f97a3"/><ellipse cx="39.4" cy="23.8" rx="2.2" ry="1.9" fill="#a3abb5"/><path d="M27,24.6 H54 V26 H61 L64,28 V45 H25 V30 L27,28Z" fill="#33292b"/><path d="M26,26.4 H55 V27.8 H26Z M25,30.6 H50 V32 H25Z" fill="#7a3034"/><path d="M28,33 H50 V36 H28Z" fill="#2a2022"/><path d="M30,33.4 h1.6 v2.2 h-1.6Z M34,33.4 h1.6 v2.2 h-1.6Z M43,33.4 h1.6 v2.2 h-1.6Z M46.4,33.4 h1.6 v2.2 h-1.6Z" fill="#c9c4c2"/><path d="M50,32 L58,28.6 L64,30 V44 H48Z" fill="#6b5a55"/><path d="M50,36 L62,33 M50,39 L62,36 M50,42 L62,39.4" stroke="#b7aeaa" stroke-width="0.8"/><path d="M46,42.6 H62 V45.4 H46Z" fill="#9ea3a3"/><path d="M59,26 Q61,23.4 64,24 V34 H60Z" fill="#3f6a35"/><path d="M17,40.6 H27 V47 H16Z" fill="#7d3a3a"/><rect x="-2" y="46.6" width="66" height="18" fill="#568c2c"/><path d="M-2,48.6 q2.5,-3.4 5,0 t5,0 t5,0 t5,0 t5,0 t5,0 t5,0 t5,0 t5,0 t5,0 t5,0 t5,0 t5,0 V52 H-2Z" fill="#6fa83c"/><g fill="#3a6a20" opacity="0.75"><circle cx="3" cy="56" r="2.2"/><circle cx="9" cy="59" r="2.4"/><circle cx="15" cy="54.6" r="2"/><circle cx="21" cy="58.6" r="2.6"/><circle cx="26" cy="54" r="1.8"/><circle cx="46" cy="55" r="2.2"/><circle cx="51" cy="59" r="2.6"/><circle cx="56" cy="53.6" r="2"/><circle cx="60" cy="58" r="2.4"/><circle cx="12" cy="51.6" r="1.4"/><circle cx="49" cy="51" r="1.4"/></g><g fill="#7fb645" opacity="0.8"><circle cx="6" cy="53" r="1.5"/><circle cx="18" cy="51.6" r="1.4"/><circle cx="24" cy="56.6" r="1.5"/><circle cx="48" cy="57.4" r="1.4"/><circle cx="54" cy="56" r="1.5"/><circle cx="58" cy="50.6" r="1.3"/></g><rect x="-2" y="60.4" width="66" height="3" fill="#335f1d"/><circle cx="35.6" cy="29" r="3.1" fill="#2b2626"/><rect x="33.6" y="30" width="4" height="4.6" fill="#4a3a36"/><path d="M30,35.6 Q35.6,33 41,35.6 L44.8,49 L42,50.6 L40.8,46 L41.6,60.6 H29.4 L30,46 L28.8,50 L26.4,48.6Z" fill="#e6e5f1"/><path d="M28,50 L29.2,58 M42.6,51 L41.4,57" stroke="#caa58f" stroke-width="1.4"/></g></g></svg>
<div class="b" style="left:0;top:354.0px;width:754px;height:88.5px;background:#eed96f;border-top:1px solid #f0f0f0;box-sizing:border-box"></div>
<span class="t" style="left:21.80px;top:391px;font-size:17.5px;font-weight:400;color:#333;">5</span>
<span class="t" style="left:169.56px;top:391px;font-size:17.5px;font-weight:400;color:#333;letter-spacing:0.061px;">Khóa tài khoản</span>
<span class="t" style="left:332.63px;top:391px;font-size:17.5px;font-weight:400;color:#333;transform:scaleX(0.9597);transform-origin:0 0;">TRUNGLM</span>
<span class="t" style="left:492.82px;top:391px;font-size:17.5px;font-weight:400;color:#333;transform:scaleX(0.9598);transform-origin:0 0;">LÊ MINH TRUNG</span>
<svg style="position:absolute;left:75.80000000000001px;top:368.0px;" width="62" height="62" viewBox="0 0 62 62"><rect width="62" height="62" fill="#fff"/><defs><clipPath id="avr4"><circle cx="30.7" cy="31.7" r="29.6"/></clipPath></defs><g clip-path="url(#avr4)"><path d="M22.2,40.3 L6,46.4 L-2,52 L-2,66 L66,66 L66,52 L56,46.0 L39.5,40.3Z" fill="#434545"/><path d="M22.2,40.2 L28,57.9 L34.3,57.9 L39.5,40.2Z" fill="#fff"/><path d="M31,5.1 C38.5,5.1 43.1,10 43.1,18 L43,22.6 C44.6,22.6 44.6,25.2 43.9,27.2 C43.4,28.8 42.8,29.6 41.9,29.6 L38,35.6 L38,39.9 L31,44.6 L24.1,39.9 L24.1,35.6 L20.2,29.6 C19.3,29.6 18.7,28.8 18.2,27.2 C17.5,25.2 17.5,22.6 19.1,22.6 L19.7,18 C19.7,10 23.5,5.1 31,5.1Z" fill="#434545"/><path d="M28.4,46.4 L31,45.2 L33.6,46.4 L32.7,48.9 L33.9,58.2 L28.1,58.2 L29.3,48.9Z" fill="#434545"/></g><circle cx="30.7" cy="31.7" r="29.75" fill="none" stroke="#434545" stroke-width="1.9"/></svg>
<div class="b" style="left:0;top:442.5px;width:754px;height:88.5px;background:#fff;border-top:1px solid #f0f0f0;box-sizing:border-box"></div>
<span class="t" style="left:21.62px;top:480px;font-size:17.5px;font-weight:400;color:#333;">6</span>
<span class="t" style="left:169.56px;top:480px;font-size:17.5px;font-weight:400;color:#333;letter-spacing:0.412px;">Hoạt động</span>
<span class="t" style="left:331.65px;top:480px;font-size:17.5px;font-weight:400;color:#333;transform:scaleX(0.9430);transform-origin:0 0;">NGOCHOAI</span>
<span class="t" style="left:492.77px;top:480px;font-size:17.5px;font-weight:400;color:#333;">Phạm Nguyễn Ngọc Hoài</span>
<svg style="position:absolute;left:75.80000000000001px;top:455.8px;" width="62" height="63" viewBox="0 0 62 63"><rect width="62" height="63" fill="#000"/><ellipse cx="31.3" cy="31.8" rx="27.6" ry="28.3" fill="#fff" stroke="#50bf9f" stroke-width="5"/><text x="11.2" y="43.5" font-family="Liberation Sans, sans-serif" font-weight="700" font-size="30.6" fill="#50bf9f" stroke="#50bf9f" stroke-width="0.8" textLength="15.5" lengthAdjust="spacingAndGlyphs">F</text><text x="22.9" y="43.5" font-family="Liberation Sans, sans-serif" font-weight="700" font-size="30.6" fill="#e99a0c" stroke="#fff" stroke-width="1.2" paint-order="stroke" textLength="27.4" lengthAdjust="spacingAndGlyphs">W</text></svg>
<div class="b" style="left:0;top:531.0px;width:754px;height:88.5px;background:#f9f9f9;border-top:1px solid #f0f0f0;box-sizing:border-box"></div>
<span class="t" style="left:21.61px;top:568px;font-size:17.5px;font-weight:400;color:#333;">7</span>
<span class="t" style="left:169.56px;top:568px;font-size:17.5px;font-weight:400;color:#333;letter-spacing:0.412px;">Hoạt động</span>
<span class="t" style="left:332.63px;top:568px;font-size:17.5px;font-weight:400;color:#333;transform:scaleX(0.9491);transform-origin:0 0;">TRANPTB</span>
<span class="t" style="left:492.78px;top:568px;font-size:17.5px;font-weight:400;color:#333;transform:scaleX(0.9919);transform-origin:0 0;">Phạm Thị Bảo Trân</span>
<svg style="position:absolute;left:75.80000000000001px;top:545.0px;" width="62" height="62" viewBox="0 0 62 62"><defs><radialGradient id="bg7" cx="0.75" cy="0.4" r="0.8"><stop offset="0" stop-color="#2c2c2c"/><stop offset="1" stop-color="#151515"/></radialGradient><filter id="bl7" x="-5%" y="-5%" width="110%" height="110%"><feGaussianBlur stdDeviation="0.6"/></filter><clipPath id="cp7"><rect width="62" height="62"/></clipPath></defs><g clip-path="url(#cp7)"><rect width="62" height="62" fill="url(#bg7)"/><g filter="url(#bl7)"><path d="M27,1.2 Q37,0.4 40.4,11 Q42.6,22 39.8,30 Q36,35 32,33 L22,33 Q14,35 11,30 Q9.4,24 13,15 Q17,3 27,1.2Z" fill="#2a1d1c"/><path d="M3,62 Q2,40 12,35 Q18,31.6 24,32 L36,40 L44,50 L50,62Z" fill="#141211"/><path d="M22,29 L30,30 L32,40 L28,42 Z" fill="#d6a890"/><ellipse cx="27.6" cy="16.2" rx="8.1" ry="11.3" fill="#e2b8a5" transform="rotate(-7 27.6 16.2)"/><path d="M18.6,15 Q20,5 28.6,4.4 Q36,4.8 37.4,13 Q33,6.8 27,7.4 Q21.6,8.6 18.6,15Z" fill="#2a1d1c"/><path d="M19.4,30 Q15.4,24 18.4,14 Q15.4,22 12,30Z" fill="#2a1d1c"/><path d="M36.4,12 Q38.6,20 36,29 L40,28 Q41.6,20 39.6,11Z" fill="#2a1d1c"/><path d="M20.4,15 h6.2 v4.4 h-6.2Z M29.2,15.8 h5.8 v4.2 h-5.8Z M26.6,17 h2.6" fill="none" stroke="#5b4a47" stroke-width="0.6"/><circle cx="23.6" cy="17" r="0.8" fill="#2a1c1a"/><circle cx="32" cy="17.8" r="0.8" fill="#2a1c1a"/><path d="M23.2,24.8 Q26,23.8 28.8,25.2 Q26,26.8 23.2,24.8Z" fill="#c9212d" stroke="#c9212d" stroke-width="0.5"/><ellipse cx="31.4" cy="33.6" rx="6.6" ry="5.4" fill="#e6bea9"/><path d="M32,37 L38.6,34.6 L45,57.6 L39.6,60 Z" fill="#e3b9a3"/><path d="M36,52 L40,60 L42,66 L34,66Z" fill="#141211"/><path d="M36.4,56 V62" stroke="#bdbdbd" stroke-width="0.8"/></g></g></svg>
<div class="b" style="left:0;top:619.5px;width:754px;height:88.5px;background:#fff;border-top:1px solid #f0f0f0;box-sizing:border-box"></div>
<span class="t" style="left:21.75px;top:657px;font-size:17.5px;font-weight:400;color:#333;">8</span>
<span class="t" style="left:169.56px;top:657px;font-size:17.5px;font-weight:400;color:#333;letter-spacing:0.412px;">Hoạt động</span>
<span class="t" style="left:332.62px;top:657px;font-size:17.5px;font-weight:400;color:#333;">TEST11</span>
<span class="t" style="left:493.82px;top:657px;font-size:17.5px;font-weight:400;color:#333;">TEST11</span>
<svg style="position:absolute;left:75.80000000000001px;top:633.5px;" width="62" height="62" viewBox="0 0 62 62"><rect width="62" height="62" fill="#fff"/><defs><clipPath id="avr7"><circle cx="30.7" cy="31.7" r="29.6"/></clipPath></defs><g clip-path="url(#avr7)"><path d="M22.2,40.3 L6,46.4 L-2,52 L-2,66 L66,66 L66,52 L56,46.0 L39.5,40.3Z" fill="#434545"/><path d="M22.2,40.2 L28,57.9 L34.3,57.9 L39.5,40.2Z" fill="#fff"/><path d="M31,5.1 C38.5,5.1 43.1,10 43.1,18 L43,22.6 C44.6,22.6 44.6,25.2 43.9,27.2 C43.4,28.8 42.8,29.6 41.9,29.6 L38,35.6 L38,39.9 L31,44.6 L24.1,39.9 L24.1,35.6 L20.2,29.6 C19.3,29.6 18.7,28.8 18.2,27.2 C17.5,25.2 17.5,22.6 19.1,22.6 L19.7,18 C19.7,10 23.5,5.1 31,5.1Z" fill="#434545"/><path d="M28.4,46.4 L31,45.2 L33.6,46.4 L32.7,48.9 L33.9,58.2 L28.1,58.2 L29.3,48.9Z" fill="#434545"/></g><circle cx="30.7" cy="31.7" r="29.75" fill="none" stroke="#434545" stroke-width="1.9"/></svg>
</div>
<div class="b" style="left:1123px;top:126.7px;width:778px;height:792px;background:#fff"></div>
<div class="b" style="left:1122px;top:187.6px;width:779px;height:1.2px;background:#e2e2e2"></div>
<span class="t" style="left:1135.64px;top:148px;font-size:17.5px;font-weight:700;color:#4fba9c;transform:scaleX(0.9247);transform-origin:0 0;">Chức năng</span>
<span class="t" style="left:1253.41px;top:148px;font-size:17.5px;font-weight:700;color:#444;transform:scaleX(0.9446);transform-origin:0 0;">Nhóm quyền</span>
<span class="t" style="left:1385.60px;top:148px;font-size:17.5px;font-weight:700;color:#444;transform:scaleX(0.9518);transform-origin:0 0;">Phụ trách</span>
<div class="b" style="left:1122px;top:857.8px;width:766px;height:1px;background:#ececec"></div>
<div class="b" style="left:1879px;top:637.4px;width:9px;height:93.8px;border-radius:4.5px;background:#c4c4c4"></div>
<div class="clip" style="left:1122px;top:195px;width:760px;height:663px">
<svg style="position:absolute;left:41.09999999999991px;top:17.5px;" width="11.9" height="6.9" viewBox="0 0 11.9 6.9"><path d="M0,0 H11.9 L5.95,6.9Z" fill="#a8a8a8"/></svg>
<svg style="position:absolute;left:60.90000000000009px;top:14.300000000000011px;" width="17" height="17" viewBox="0 0 17 17"><defs><linearGradient id="cbg0" x1="0" y1="0" x2="0" y2="1"><stop offset="0" stop-color="#f3f3f3"/><stop offset="1" stop-color="#e2e2e2"/></linearGradient><linearGradient id="ckg0" x1="0" y1="0" x2="0" y2="1"><stop offset="0" stop-color="#9be05a"/><stop offset="0.45" stop-color="#5cb812"/><stop offset="1" stop-color="#3d9a08"/></linearGradient></defs><rect x="0.65" y="0.65" width="15.7" height="15.7" fill="url(#cbg0)" stroke="#b2b2b2" stroke-width="1.3"/><path d="M1,6.9 L3.5,4.5 L7.4,7.8 L13.8,2.4 L16,4.2 L7.3,13.7Z" fill="url(#ckg0)" stroke="url(#ckg0)" stroke-width="0.5" stroke-linejoin="round"/></svg>
<svg style="position:absolute;left:82.9px;top:14.800000000000006px;" width="19.2" height="16.5" viewBox="0 0 19.2 16.5"><path d="M1.6,0 H17.6 Q19.2,0 19.2,1.6 V12.8 Q19.2,14.4 17.6,14.4 H1.6 Q0,14.4 0,12.8 V1.6 Q0,0 1.6,0Z M1.1,1.4 V10.4 H18.1 V1.4Z" fill="#41799f" fill-rule="evenodd"/><path d="M7.5,14.2 H12.2 L13.2,16.5 H6.4Z" fill="#41799f"/></svg>
<span class="t" style="left:106.01px;top:15px;font-size:17.5px;font-weight:400;color:#111;transform:scaleX(0.9680);transform-origin:0 0;">Bán hàng (SALE)</span>
<svg style="position:absolute;left:63.200000000000045px;top:45.0px;" width="11.9" height="6.9" viewBox="0 0 11.9 6.9"><path d="M0,0 H11.9 L5.95,6.9Z" fill="#a8a8a8"/></svg>
<svg style="position:absolute;left:83px;top:41.80000000000001px;" width="17" height="17" viewBox="0 0 17 17"><defs><linearGradient id="cbg1" x1="0" y1="0" x2="0" y2="1"><stop offset="0" stop-color="#f3f3f3"/><stop offset="1" stop-color="#e2e2e2"/></linearGradient><linearGradient id="ckg1" x1="0" y1="0" x2="0" y2="1"><stop offset="0" stop-color="#9be05a"/><stop offset="0.45" stop-color="#5cb812"/><stop offset="1" stop-color="#3d9a08"/></linearGradient></defs><rect x="0.65" y="0.65" width="15.7" height="15.7" fill="url(#cbg1)" stroke="#b2b2b2" stroke-width="1.3"/><path d="M1,6.9 L3.5,4.5 L7.4,7.8 L13.8,2.4 L16,4.2 L7.3,13.7Z" fill="url(#ckg1)" stroke="url(#ckg1)" stroke-width="0.5" stroke-linejoin="round"/></svg>
<svg style="position:absolute;left:105.00000000000009px;top:41.50000000000001px;" width="19.1" height="18.3" viewBox="0 0 19.1 18.3"><rect x="4.65" y="0" width="3.35" height="2.1" fill="#41799f"/><rect x="11.5" y="0" width="3.4" height="2.1" fill="#41799f"/><path d="M2.9,3.4 H7.5 V10.6 H6.7 V17.6 Q6.7,18.3 6,18.3 H1 Q0.3,18.3 0.3,17.6 V12Z" fill="#41799f"/><rect x="8.3" y="3.4" width="2.8" height="6.7" fill="#41799f"/><path d="M12,3.4 H16.5 L18.9,12 V17.6 Q18.9,18.3 18.2,18.3 H13.4 Q12.7,18.3 12.7,17.6 V10.6 H12Z" fill="#41799f"/></svg>
<span class="t" style="left:130.62px;top:43px;font-size:17.5px;font-weight:400;color:#111;transform:scaleX(0.9789);transform-origin:0 0;">Toàn quyền phân hệ bán hàng</span>
<svg style="position:absolute;left:63.200000000000045px;top:72.5px;" width="11.9" height="6.9" viewBox="0 0 11.9 6.9"><path d="M0,0 H11.9 L5.95,6.9Z" fill="#a8a8a8"/></svg>
<svg style="position:absolute;left:83px;top:69.29999999999995px;" width="17" height="17" viewBox="0 0 17 17"><defs><linearGradient id="cbg2" x1="0" y1="0" x2="0" y2="1"><stop offset="0" stop-color="#f3f3f3"/><stop offset="1" stop-color="#e2e2e2"/></linearGradient><linearGradient id="ckg2" x1="0" y1="0" x2="0" y2="1"><stop offset="0" stop-color="#9be05a"/><stop offset="0.45" stop-color="#5cb812"/><stop offset="1" stop-color="#3d9a08"/></linearGradient></defs><rect x="0.65" y="0.65" width="15.7" height="15.7" fill="url(#cbg2)" stroke="#b2b2b2" stroke-width="1.3"/><path d="M1,6.9 L3.5,4.5 L7.4,7.8 L13.8,2.4 L16,4.2 L7.3,13.7Z" fill="url(#ckg2)" stroke="url(#ckg2)" stroke-width="0.5" stroke-linejoin="round"/></svg>
<svg style="position:absolute;left:105.00000000000009px;top:68.99999999999997px;" width="19.1" height="18.3" viewBox="0 0 19.1 18.3"><rect x="4.65" y="0" width="3.35" height="2.1" fill="#41799f"/><rect x="11.5" y="0" width="3.4" height="2.1" fill="#41799f"/><path d="M2.9,3.4 H7.5 V10.6 H6.7 V17.6 Q6.7,18.3 6,18.3 H1 Q0.3,18.3 0.3,17.6 V12Z" fill="#41799f"/><rect x="8.3" y="3.4" width="2.8" height="6.7" fill="#41799f"/><path d="M12,3.4 H16.5 L18.9,12 V17.6 Q18.9,18.3 18.2,18.3 H13.4 Q12.7,18.3 12.7,17.6 V10.6 H12Z" fill="#41799f"/></svg>
<span class="t" style="left:130.19px;top:70px;font-size:17.5px;font-weight:400;color:#111;transform:scaleX(0.9792);transform-origin:0 0;">Quản trị phân hệ bán hàng</span>
<svg style="position:absolute;left:63.200000000000045px;top:100.0px;" width="11.9" height="6.9" viewBox="0 0 11.9 6.9"><path d="M0,0 H11.9 L5.95,6.9Z" fill="#a8a8a8"/></svg>
<svg style="position:absolute;left:83px;top:96.79999999999995px;" width="17" height="17" viewBox="0 0 17 17"><defs><linearGradient id="cbg3" x1="0" y1="0" x2="0" y2="1"><stop offset="0" stop-color="#f3f3f3"/><stop offset="1" stop-color="#e2e2e2"/></linearGradient><linearGradient id="ckg3" x1="0" y1="0" x2="0" y2="1"><stop offset="0" stop-color="#9be05a"/><stop offset="0.45" stop-color="#5cb812"/><stop offset="1" stop-color="#3d9a08"/></linearGradient></defs><rect x="0.65" y="0.65" width="15.7" height="15.7" fill="url(#cbg3)" stroke="#b2b2b2" stroke-width="1.3"/><path d="M1,6.9 L3.5,4.5 L7.4,7.8 L13.8,2.4 L16,4.2 L7.3,13.7Z" fill="url(#ckg3)" stroke="url(#ckg3)" stroke-width="0.5" stroke-linejoin="round"/></svg>
<svg style="position:absolute;left:105.00000000000009px;top:96.49999999999997px;" width="19.1" height="18.3" viewBox="0 0 19.1 18.3"><rect x="4.65" y="0" width="3.35" height="2.1" fill="#41799f"/><rect x="11.5" y="0" width="3.4" height="2.1" fill="#41799f"/><path d="M2.9,3.4 H7.5 V10.6 H6.7 V17.6 Q6.7,18.3 6,18.3 H1 Q0.3,18.3 0.3,17.6 V12Z" fill="#41799f"/><rect x="8.3" y="3.4" width="2.8" height="6.7" fill="#41799f"/><path d="M12,3.4 H16.5 L18.9,12 V17.6 Q18.9,18.3 18.2,18.3 H13.4 Q12.7,18.3 12.7,17.6 V10.6 H12Z" fill="#41799f"/></svg>
<span class="t" style="left:130.62px;top:98px;font-size:17.5px;font-weight:400;color:#111;transform:scaleX(0.9797);transform-origin:0 0;">Truy cập phân hệ bán hàng</span>
<svg style="position:absolute;left:63.200000000000045px;top:127.5px;" width="11.9" height="6.9" viewBox="0 0 11.9 6.9"><path d="M0,0 H11.9 L5.95,6.9Z" fill="#a8a8a8"/></svg>
<svg style="position:absolute;left:83px;top:124.29999999999995px;" width="17" height="17" viewBox="0 0 17 17"><defs><linearGradient id="cbg4" x1="0" y1="0" x2="0" y2="1"><stop offset="0" stop-color="#f3f3f3"/><stop offset="1" stop-color="#e2e2e2"/></linearGradient><linearGradient id="ckg4" x1="0" y1="0" x2="0" y2="1"><stop offset="0" stop-color="#9be05a"/><stop offset="0.45" stop-color="#5cb812"/><stop offset="1" stop-color="#3d9a08"/></linearGradient></defs><rect x="0.65" y="0.65" width="15.7" height="15.7" fill="url(#cbg4)" stroke="#b2b2b2" stroke-width="1.3"/><path d="M1,6.9 L3.5,4.5 L7.4,7.8 L13.8,2.4 L16,4.2 L7.3,13.7Z" fill="url(#ckg4)" stroke="url(#ckg4)" stroke-width="0.5" stroke-linejoin="round"/></svg>
<svg style="position:absolute;left:105.00000000000009px;top:123.99999999999997px;" width="19.1" height="18.3" viewBox="0 0 19.1 18.3"><rect x="4.65" y="0" width="3.35" height="2.1" fill="#41799f"/><rect x="11.5" y="0" width="3.4" height="2.1" fill="#41799f"/><path d="M2.9,3.4 H7.5 V10.6 H6.7 V17.6 Q6.7,18.3 6,18.3 H1 Q0.3,18.3 0.3,17.6 V12Z" fill="#41799f"/><rect x="8.3" y="3.4" width="2.8" height="6.7" fill="#41799f"/><path d="M12,3.4 H16.5 L18.9,12 V17.6 Q18.9,18.3 18.2,18.3 H13.4 Q12.7,18.3 12.7,17.6 V10.6 H12Z" fill="#41799f"/></svg>
<span class="t" style="left:130.20px;top:125px;font-size:17.5px;font-weight:400;color:#111;transform:scaleX(0.9668);transform-origin:0 0;">Quản lý kho</span>
<svg style="position:absolute;left:86.09999999999991px;top:155.0px;" width="11.9" height="6.9" viewBox="0 0 11.9 6.9"><path d="M0,0 H11.9 L5.95,6.9Z" fill="#a8a8a8"/></svg>
<svg style="position:absolute;left:106.09999999999991px;top:151.79999999999995px;" width="17" height="17" viewBox="0 0 17 17"><defs><linearGradient id="cbg5" x1="0" y1="0" x2="0" y2="1"><stop offset="0" stop-color="#f3f3f3"/><stop offset="1" stop-color="#e2e2e2"/></linearGradient><linearGradient id="ckg5" x1="0" y1="0" x2="0" y2="1"><stop offset="0" stop-color="#9be05a"/><stop offset="0.45" stop-color="#5cb812"/><stop offset="1" stop-color="#3d9a08"/></linearGradient></defs><rect x="0.65" y="0.65" width="15.7" height="15.7" fill="url(#cbg5)" stroke="#b2b2b2" stroke-width="1.3"/><path d="M1,6.9 L3.5,4.5 L7.4,7.8 L13.8,2.4 L16,4.2 L7.3,13.7Z" fill="url(#ckg5)" stroke="url(#ckg5)" stroke-width="0.5" stroke-linejoin="round"/></svg>
<svg style="position:absolute;left:128.0px;top:153.39999999999998px;" width="18" height="14.8" viewBox="0 0 18.7 15.5"><rect x="6.5" y="0" width="5.8" height="4.9" rx="0.5" fill="#41799f"/><rect x="0" y="10.3" width="5.4" height="5.2" rx="0.5" fill="#41799f"/><rect x="6.65" y="10.3" width="5.4" height="5.2" rx="0.5" fill="#41799f"/><rect x="13.3" y="10.3" width="5.4" height="5.2" rx="0.5" fill="#41799f"/><path d="M9.35,4.5 V10.6 M2.7,10.6 V7.6 H16 V10.6" fill="none" stroke="#41799f" stroke-width="1.1"/></svg>
<span class="t" style="left:152.02px;top:153px;font-size:17.5px;font-weight:400;color:#111;transform:scaleX(0.9929);transform-origin:0 0;">Toàn quyền kho</span>
<svg style="position:absolute;left:86.09999999999991px;top:182.5px;" width="11.9" height="6.9" viewBox="0 0 11.9 6.9"><path d="M0,0 H11.9 L5.95,6.9Z" fill="#a8a8a8"/></svg>
<svg style="position:absolute;left:106.09999999999991px;top:179.29999999999995px;" width="17" height="17" viewBox="0 0 17 17"><defs><linearGradient id="cbg6" x1="0" y1="0" x2="0" y2="1"><stop offset="0" stop-color="#f3f3f3"/><stop offset="1" stop-color="#e2e2e2"/></linearGradient><linearGradient id="ckg6" x1="0" y1="0" x2="0" y2="1"><stop offset="0" stop-color="#9be05a"/><stop offset="0.45" stop-color="#5cb812"/><stop offset="1" stop-color="#3d9a08"/></linearGradient></defs><rect x="0.65" y="0.65" width="15.7" height="15.7" fill="url(#cbg6)" stroke="#b2b2b2" stroke-width="1.3"/><path d="M1,6.9 L3.5,4.5 L7.4,7.8 L13.8,2.4 L16,4.2 L7.3,13.7Z" fill="url(#ckg6)" stroke="url(#ckg6)" stroke-width="0.5" stroke-linejoin="round"/></svg>
<svg style="position:absolute;left:128.4px;top:179.89999999999998px;" width="14" height="15.6" viewBox="0 0 14 15.6"><path d="M3.2,4.5 L4.3,0.9 Q4.9,0.2 5.8,0.7 L7,1.3 L8.2,0.7 Q9.1,0.2 9.7,0.9 L10.8,4.5Z" fill="#41799f"/><rect x="0.6" y="4.1" width="12.8" height="1.6" rx="0.8" fill="#41799f"/><path d="M3.2,5.6 H10.8 V8 Q10.8,10.8 7,10.8 Q3.2,10.8 3.2,8Z" fill="#41799f"/><rect x="4.3" y="6.7" width="2" height="1" fill="#fff"/><rect x="7.7" y="6.7" width="2" height="1" fill="#fff"/><path d="M2.6,9.5 Q0.2,10.6 0.2,14 Q0.2,15.6 1.8,15.6 H12.2 Q13.8,15.6 13.8,14 Q13.8,10.6 11.4,9.5 L7,10.8Z" fill="#41799f"/><path d="M5.1,10.8 L6.1,14.8 M8.9,10.8 L7.9,14.8" stroke="#fff" stroke-width="0.9" fill="none"/></svg>
<span class="t" style="left:151.58px;top:180px;font-size:17.5px;font-weight:400;color:#111;transform:scaleX(0.9916);transform-origin:0 0;">Quản trị kho</span>
<svg style="position:absolute;left:86.09999999999991px;top:210.0px;" width="11.9" height="6.9" viewBox="0 0 11.9 6.9"><path d="M0,0 H11.9 L5.95,6.9Z" fill="#a8a8a8"/></svg>
<svg style="position:absolute;left:106.09999999999991px;top:206.79999999999995px;" width="17" height="17" viewBox="0 0 17 17"><defs><linearGradient id="cbg7" x1="0" y1="0" x2="0" y2="1"><stop offset="0" stop-color="#f3f3f3"/><stop offset="1" stop-color="#e2e2e2"/></linearGradient><linearGradient id="ckg7" x1="0" y1="0" x2="0" y2="1"><stop offset="0" stop-color="#9be05a"/><stop offset="0.45" stop-color="#5cb812"/><stop offset="1" stop-color="#3d9a08"/></linearGradient></defs><rect x="0.65" y="0.65" width="15.7" height="15.7" fill="url(#cbg7)" stroke="#b2b2b2" stroke-width="1.3"/><path d="M1,6.9 L3.5,4.5 L7.4,7.8 L13.8,2.4 L16,4.2 L7.3,13.7Z" fill="url(#ckg7)" stroke="url(#ckg7)" stroke-width="0.5" stroke-linejoin="round"/></svg>
<svg style="position:absolute;left:129.0px;top:206.29999999999998px;" width="16" height="19" viewBox="0 0 15 18"><path d="M4.2,9.2 V2.2 Q4.2,0.7 5.5,0.7 Q6.8,0.7 6.8,2.2 V7 Q7.4,6.3 8.4,6.5 Q9.2,6.7 9.4,7.4 Q10,6.9 10.9,7.2 Q11.6,7.5 11.8,8.2 Q12.6,7.9 13.3,8.5 Q13.9,9 13.9,10 V12.4 Q13.9,14 13.2,15.4 V17.3 H6 V15.6 Q4.6,14.6 3.4,12.6 Q2.4,11 1.4,10.2 Q0.9,9.4 1.6,8.8 Q2.6,8.2 4.2,9.2Z" fill="#fff" stroke="#41799f" stroke-width="1.1" stroke-linejoin="round"/><path d="M7.6,11.4 V14.6 M9.6,11.4 V14.6 M11.6,11.4 V14.6" stroke="#41799f" stroke-width="0.9" fill="none"/></svg>
<span class="t" style="left:152.03px;top:208px;font-size:17.5px;font-weight:400;color:#111;transform:scaleX(0.9717);transform-origin:0 0;">Truy cập kho</span>
<svg style="position:absolute;left:86.09999999999991px;top:237.5px;" width="11.9" height="6.9" viewBox="0 0 11.9 6.9"><path d="M0,0 H11.9 L5.95,6.9Z" fill="#a8a8a8"/></svg>
<svg style="position:absolute;left:106.09999999999991px;top:234.29999999999995px;" width="17" height="17" viewBox="0 0 17 17"><defs><linearGradient id="cbg8" x1="0" y1="0" x2="0" y2="1"><stop offset="0" stop-color="#f3f3f3"/><stop offset="1" stop-color="#e2e2e2"/></linearGradient><linearGradient id="ckg8" x1="0" y1="0" x2="0" y2="1"><stop offset="0" stop-color="#9be05a"/><stop offset="0.45" stop-color="#5cb812"/><stop offset="1" stop-color="#3d9a08"/></linearGradient></defs><rect x="0.65" y="0.65" width="15.7" height="15.7" fill="url(#cbg8)" stroke="#b2b2b2" stroke-width="1.3"/><path d="M1,6.9 L3.5,4.5 L7.4,7.8 L13.8,2.4 L16,4.2 L7.3,13.7Z" fill="url(#ckg8)" stroke="url(#ckg8)" stroke-width="0.5" stroke-linejoin="round"/></svg>
<svg style="position:absolute;left:129.4px;top:236.2px;" width="13" height="13" viewBox="0 0 13 13"><path d="M4.6,0 H8.4 V4.6 H13 V8.4 H8.4 V13 H4.6 V8.4 H0 V4.6 H4.6Z" fill="#41799f"/></svg>
<span class="t" style="left:152.02px;top:235px;font-size:17.5px;font-weight:400;color:#111;">Thêm kho</span>
<svg style="position:absolute;left:63.200000000000045px;top:265.0px;" width="11.9" height="6.9" viewBox="0 0 11.9 6.9"><path d="M0,0 H11.9 L5.95,6.9Z" fill="#a8a8a8"/></svg>
<svg style="position:absolute;left:83px;top:261.79999999999995px;" width="17" height="17" viewBox="0 0 17 17"><defs><linearGradient id="cbg9" x1="0" y1="0" x2="0" y2="1"><stop offset="0" stop-color="#f3f3f3"/><stop offset="1" stop-color="#e2e2e2"/></linearGradient><linearGradient id="ckg9" x1="0" y1="0" x2="0" y2="1"><stop offset="0" stop-color="#9be05a"/><stop offset="0.45" stop-color="#5cb812"/><stop offset="1" stop-color="#3d9a08"/></linearGradient></defs><rect x="0.65" y="0.65" width="15.7" height="15.7" fill="url(#cbg9)" stroke="#b2b2b2" stroke-width="1.3"/><path d="M1,6.9 L3.5,4.5 L7.4,7.8 L13.8,2.4 L16,4.2 L7.3,13.7Z" fill="url(#ckg9)" stroke="url(#ckg9)" stroke-width="0.5" stroke-linejoin="round"/></svg>
<svg style="position:absolute;left:105.00000000000009px;top:261.5px;" width="19.1" height="18.3" viewBox="0 0 19.1 18.3"><rect x="4.65" y="0" width="3.35" height="2.1" fill="#41799f"/><rect x="11.5" y="0" width="3.4" height="2.1" fill="#41799f"/><path d="M2.9,3.4 H7.5 V10.6 H6.7 V17.6 Q6.7,18.3 6,18.3 H1 Q0.3,18.3 0.3,17.6 V12Z" fill="#41799f"/><rect x="8.3" y="3.4" width="2.8" height="6.7" fill="#41799f"/><path d="M12,3.4 H16.5 L18.9,12 V17.6 Q18.9,18.3 18.2,18.3 H13.4 Q12.7,18.3 12.7,17.6 V10.6 H12Z" fill="#41799f"/></svg>
<span class="t" style="left:130.20px;top:263px;font-size:17.5px;font-weight:400;color:#111;transform:scaleX(0.9785);transform-origin:0 0;">Quản lý đơn đặt mua</span>
<svg style="position:absolute;left:86.09999999999991px;top:292.5px;" width="11.9" height="6.9" viewBox="0 0 11.9 6.9"><path d="M0,0 H11.9 L5.95,6.9Z" fill="#a8a8a8"/></svg>
<svg style="position:absolute;left:106.09999999999991px;top:289.29999999999995px;" width="17" height="17" viewBox="0 0 17 17"><defs><linearGradient id="cbg10" x1="0" y1="0" x2="0" y2="1"><stop offset="0" stop-color="#f3f3f3"/><stop offset="1" stop-color="#e2e2e2"/></linearGradient><linearGradient id="ckg10" x1="0" y1="0" x2="0" y2="1"><stop offset="0" stop-color="#9be05a"/><stop offset="0.45" stop-color="#5cb812"/><stop offset="1" stop-color="#3d9a08"/></linearGradient></defs><rect x="0.65" y="0.65" width="15.7" height="15.7" fill="url(#cbg10)" stroke="#b2b2b2" stroke-width="1.3"/><path d="M1,6.9 L3.5,4.5 L7.4,7.8 L13.8,2.4 L16,4.2 L7.3,13.7Z" fill="url(#ckg10)" stroke="url(#ckg10)" stroke-width="0.5" stroke-linejoin="round"/></svg>
<svg style="position:absolute;left:128.0px;top:290.9px;" width="18" height="14.8" viewBox="0 0 18.7 15.5"><rect x="6.5" y="0" width="5.8" height="4.9" rx="0.5" fill="#41799f"/><rect x="0" y="10.3" width="5.4" height="5.2" rx="0.5" fill="#41799f"/><rect x="6.65" y="10.3" width="5.4" height="5.2" rx="0.5" fill="#41799f"/><rect x="13.3" y="10.3" width="5.4" height="5.2" rx="0.5" fill="#41799f"/><path d="M9.35,4.5 V10.6 M2.7,10.6 V7.6 H16 V10.6" fill="none" stroke="#41799f" stroke-width="1.1"/></svg>
<span class="t" style="left:152.02px;top:290px;font-size:17.5px;font-weight:400;color:#111;transform:scaleX(0.9932);transform-origin:0 0;">Toàn quyền đơn đặt mua</span>
<svg style="position:absolute;left:86.09999999999991px;top:320.0px;" width="11.9" height="6.9" viewBox="0 0 11.9 6.9"><path d="M0,0 H11.9 L5.95,6.9Z" fill="#a8a8a8"/></svg>
<svg style="position:absolute;left:106.09999999999991px;top:316.79999999999995px;" width="17" height="17" viewBox="0 0 17 17"><defs><linearGradient id="cbg11" x1="0" y1="0" x2="0" y2="1"><stop offset="0" stop-color="#f3f3f3"/><stop offset="1" stop-color="#e2e2e2"/></linearGradient><linearGradient id="ckg11" x1="0" y1="0" x2="0" y2="1"><stop offset="0" stop-color="#9be05a"/><stop offset="0.45" stop-color="#5cb812"/><stop offset="1" stop-color="#3d9a08"/></linearGradient></defs><rect x="0.65" y="0.65" width="15.7" height="15.7" fill="url(#cbg11)" stroke="#b2b2b2" stroke-width="1.3"/><path d="M1,6.9 L3.5,4.5 L7.4,7.8 L13.8,2.4 L16,4.2 L7.3,13.7Z" fill="url(#ckg11)" stroke="url(#ckg11)" stroke-width="0.5" stroke-linejoin="round"/></svg>
<svg style="position:absolute;left:128.4px;top:317.4px;" width="14" height="15.6" viewBox="0 0 14 15.6"><path d="M3.2,4.5 L4.3,0.9 Q4.9,0.2 5.8,0.7 L7,1.3 L8.2,0.7 Q9.1,0.2 9.7,0.9 L10.8,4.5Z" fill="#41799f"/><rect x="0.6" y="4.1" width="12.8" height="1.6" rx="0.8" fill="#41799f"/><path d="M3.2,5.6 H10.8 V8 Q10.8,10.8 7,10.8 Q3.2,10.8 3.2,8Z" fill="#41799f"/><rect x="4.3" y="6.7" width="2" height="1" fill="#fff"/><rect x="7.7" y="6.7" width="2" height="1" fill="#fff"/><path d="M2.6,9.5 Q0.2,10.6 0.2,14 Q0.2,15.6 1.8,15.6 H12.2 Q13.8,15.6 13.8,14 Q13.8,10.6 11.4,9.5 L7,10.8Z" fill="#41799f"/><path d="M5.1,10.8 L6.1,14.8 M8.9,10.8 L7.9,14.8" stroke="#fff" stroke-width="0.9" fill="none"/></svg>
<span class="t" style="left:151.59px;top:318px;font-size:17.5px;font-weight:400;color:#111;transform:scaleX(0.9894);transform-origin:0 0;">Quản trị đơn đặt mua</span>
<svg style="position:absolute;left:86.09999999999991px;top:347.5px;" width="11.9" height="6.9" viewBox="0 0 11.9 6.9"><path d="M0,0 H11.9 L5.95,6.9Z" fill="#a8a8a8"/></svg>
<svg style="position:absolute;left:106.09999999999991px;top:344.29999999999995px;" width="17" height="17" viewBox="0 0 17 17"><defs><linearGradient id="cbg12" x1="0" y1="0" x2="0" y2="1"><stop offset="0" stop-color="#f3f3f3"/><stop offset="1" stop-color="#e2e2e2"/></linearGradient><linearGradient id="ckg12" x1="0" y1="0" x2="0" y2="1"><stop offset="0" stop-color="#9be05a"/><stop offset="0.45" stop-color="#5cb812"/><stop offset="1" stop-color="#3d9a08"/></linearGradient></defs><rect x="0.65" y="0.65" width="15.7" height="15.7" fill="url(#cbg12)" stroke="#b2b2b2" stroke-width="1.3"/><path d="M1,6.9 L3.5,4.5 L7.4,7.8 L13.8,2.4 L16,4.2 L7.3,13.7Z" fill="url(#ckg12)" stroke="url(#ckg12)" stroke-width="0.5" stroke-linejoin="round"/></svg>
<svg style="position:absolute;left:129.0px;top:343.79999999999995px;" width="16" height="19" viewBox="0 0 15 18"><path d="M4.2,9.2 V2.2 Q4.2,0.7 5.5,0.7 Q6.8,0.7 6.8,2.2 V7 Q7.4,6.3 8.4,6.5 Q9.2,6.7 9.4,7.4 Q10,6.9 10.9,7.2 Q11.6,7.5 11.8,8.2 Q12.6,7.9 13.3,8.5 Q13.9,9 13.9,10 V12.4 Q13.9,14 13.2,15.4 V17.3 H6 V15.6 Q4.6,14.6 3.4,12.6 Q2.4,11 1.4,10.2 Q0.9,9.4 1.6,8.8 Q2.6,8.2 4.2,9.2Z" fill="#fff" stroke="#41799f" stroke-width="1.1" stroke-linejoin="round"/><path d="M7.6,11.4 V14.6 M9.6,11.4 V14.6 M11.6,11.4 V14.6" stroke="#41799f" stroke-width="0.9" fill="none"/></svg>
<span class="t" style="left:152.02px;top:345px;font-size:17.5px;font-weight:400;color:#111;transform:scaleX(0.9880);transform-origin:0 0;">Truy cập đơn đặt mua</span>
<svg style="position:absolute;left:86.09999999999991px;top:375.0px;" width="11.9" height="6.9" viewBox="0 0 11.9 6.9"><path d="M0,0 H11.9 L5.95,6.9Z" fill="#a8a8a8"/></svg>
<svg style="position:absolute;left:106.09999999999991px;top:371.79999999999995px;" width="17" height="17" viewBox="0 0 17 17"><defs><linearGradient id="cbg13" x1="0" y1="0" x2="0" y2="1"><stop offset="0" stop-color="#f3f3f3"/><stop offset="1" stop-color="#e2e2e2"/></linearGradient><linearGradient id="ckg13" x1="0" y1="0" x2="0" y2="1"><stop offset="0" stop-color="#9be05a"/><stop offset="0.45" stop-color="#5cb812"/><stop offset="1" stop-color="#3d9a08"/></linearGradient></defs><rect x="0.65" y="0.65" width="15.7" height="15.7" fill="url(#cbg13)" stroke="#b2b2b2" stroke-width="1.3"/><path d="M1,6.9 L3.5,4.5 L7.4,7.8 L13.8,2.4 L16,4.2 L7.3,13.7Z" fill="url(#ckg13)" stroke="url(#ckg13)" stroke-width="0.5" stroke-linejoin="round"/></svg>
<svg style="position:absolute;left:129.4px;top:373.7px;" width="13" height="13" viewBox="0 0 13 13"><path d="M4.6,0 H8.4 V4.6 H13 V8.4 H8.4 V13 H4.6 V8.4 H0 V4.6 H4.6Z" fill="#41799f"/></svg>
<span class="t" style="left:152.02px;top:373px;font-size:17.5px;font-weight:400;color:#111;transform:scaleX(0.9928);transform-origin:0 0;">Thêm đơn đặt mua</span>
<svg style="position:absolute;left:86.09999999999991px;top:402.5px;" width="11.9" height="6.9" viewBox="0 0 11.9 6.9"><path d="M0,0 H11.9 L5.95,6.9Z" fill="#a8a8a8"/></svg>
<svg style="position:absolute;left:106.09999999999991px;top:399.29999999999995px;" width="17" height="17" viewBox="0 0 17 17"><defs><linearGradient id="cbg14" x1="0" y1="0" x2="0" y2="1"><stop offset="0" stop-color="#f3f3f3"/><stop offset="1" stop-color="#e2e2e2"/></linearGradient><linearGradient id="ckg14" x1="0" y1="0" x2="0" y2="1"><stop offset="0" stop-color="#9be05a"/><stop offset="0.45" stop-color="#5cb812"/><stop offset="1" stop-color="#3d9a08"/></linearGradient></defs><rect x="0.65" y="0.65" width="15.7" height="15.7" fill="url(#cbg14)" stroke="#b2b2b2" stroke-width="1.3"/><path d="M1,6.9 L3.5,4.5 L7.4,7.8 L13.8,2.4 L16,4.2 L7.3,13.7Z" fill="url(#ckg14)" stroke="url(#ckg14)" stroke-width="0.5" stroke-linejoin="round"/></svg>
<svg style="position:absolute;left:128.9px;top:400.4px;" width="17.5" height="15" viewBox="0 0 17.5 15"><path d="M9.8,1 H2.6 Q0.6,1 0.6,3 V11.8 Q0.6,13.8 2.6,13.8 H11 Q13,13.8 13,11.8 V9.6" fill="none" stroke="#41799f" stroke-width="1.1"/><path d="M5.5,10.7 L6.3,7.5 L14.2,0.3 L17,3.1 L8.7,10Z" fill="#41799f"/><path d="M6.1,9.3 L6.9,10.1" stroke="#fff" stroke-width="0.9"/></svg>
<span class="t" style="left:151.63px;top:400px;font-size:17.5px;font-weight:400;color:#111;transform:scaleX(0.9790);transform-origin:0 0;">Sửa đơn đặt mua</span>
<svg style="position:absolute;left:86.09999999999991px;top:430.0px;" width="11.9" height="6.9" viewBox="0 0 11.9 6.9"><path d="M0,0 H11.9 L5.95,6.9Z" fill="#a8a8a8"/></svg>
<svg style="position:absolute;left:106.09999999999991px;top:426.79999999999995px;" width="17" height="17" viewBox="0 0 17 17"><defs><linearGradient id="cbg15" x1="0" y1="0" x2="0" y2="1"><stop offset="0" stop-color="#f3f3f3"/><stop offset="1" stop-color="#e2e2e2"/></linearGradient><linearGradient id="ckg15" x1="0" y1="0" x2="0" y2="1"><stop offset="0" stop-color="#9be05a"/><stop offset="0.45" stop-color="#5cb812"/><stop offset="1" stop-color="#3d9a08"/></linearGradient></defs><rect x="0.65" y="0.65" width="15.7" height="15.7" fill="url(#cbg15)" stroke="#b2b2b2" stroke-width="1.3"/><path d="M1,6.9 L3.5,4.5 L7.4,7.8 L13.8,2.4 L16,4.2 L7.3,13.7Z" fill="url(#ckg15)" stroke="url(#ckg15)" stroke-width="0.5" stroke-linejoin="round"/></svg>
<svg style="position:absolute;left:129.2px;top:427.7px;" width="12.6" height="15.2" viewBox="0 0 12.6 15.2"><path d="M0,3.2 H12.6 M3.6,3.2 V1.4 Q3.6,0.6 4.4,0.6 H8.2 Q9,0.6 9,1.4 V3.2" fill="none" stroke="#41799f" stroke-width="1.1"/><path d="M1.4,3.6 V13.2 Q1.4,14.6 2.8,14.6 H9.8 Q11.2,14.6 11.2,13.2 V3.6" fill="none" stroke="#41799f" stroke-width="1.1"/><path d="M3.5,5.8 V12 M6.1,5.8 V12 M8.7,5.8 V12" stroke="#41799f" stroke-width="0.9" fill="none"/></svg>
<span class="t" style="left:152.02px;top:428px;font-size:17.5px;font-weight:400;color:#111;transform:scaleX(0.9868);transform-origin:0 0;">Xóa đơn đặt mua</span>
<svg style="position:absolute;left:63.200000000000045px;top:457.5px;" width="11.9" height="6.9" viewBox="0 0 11.9 6.9"><path d="M0,0 H11.9 L5.95,6.9Z" fill="#a8a8a8"/></svg>
<svg style="position:absolute;left:83px;top:454.29999999999995px;" width="17" height="17" viewBox="0 0 17 17"><defs><linearGradient id="cbg16" x1="0" y1="0" x2="0" y2="1"><stop offset="0" stop-color="#f3f3f3"/><stop offset="1" stop-color="#e2e2e2"/></linearGradient><linearGradient id="ckg16" x1="0" y1="0" x2="0" y2="1"><stop offset="0" stop-color="#9be05a"/><stop offset="0.45" stop-color="#5cb812"/><stop offset="1" stop-color="#3d9a08"/></linearGradient></defs><rect x="0.65" y="0.65" width="15.7" height="15.7" fill="url(#cbg16)" stroke="#b2b2b2" stroke-width="1.3"/><path d="M1,6.9 L3.5,4.5 L7.4,7.8 L13.8,2.4 L16,4.2 L7.3,13.7Z" fill="url(#ckg16)" stroke="url(#ckg16)" stroke-width="0.5" stroke-linejoin="round"/></svg>
<svg style="position:absolute;left:105.00000000000009px;top:454.0px;" width="19.1" height="18.3" viewBox="0 0 19.1 18.3"><rect x="4.65" y="0" width="3.35" height="2.1" fill="#41799f"/><rect x="11.5" y="0" width="3.4" height="2.1" fill="#41799f"/><path d="M2.9,3.4 H7.5 V10.6 H6.7 V17.6 Q6.7,18.3 6,18.3 H1 Q0.3,18.3 0.3,17.6 V12Z" fill="#41799f"/><rect x="8.3" y="3.4" width="2.8" height="6.7" fill="#41799f"/><path d="M12,3.4 H16.5 L18.9,12 V17.6 Q18.9,18.3 18.2,18.3 H13.4 Q12.7,18.3 12.7,17.6 V10.6 H12Z" fill="#41799f"/></svg>
<span class="t" style="left:130.20px;top:455px;font-size:17.5px;font-weight:400;color:#111;transform:scaleX(0.9787);transform-origin:0 0;">Quản lý đơn mua hàng</span>
<svg style="position:absolute;left:86.09999999999991px;top:485.0px;" width="11.9" height="6.9" viewBox="0 0 11.9 6.9"><path d="M0,0 H11.9 L5.95,6.9Z" fill="#a8a8a8"/></svg>
<svg style="position:absolute;left:106.09999999999991px;top:481.79999999999995px;" width="17" height="17" viewBox="0 0 17 17"><defs><linearGradient id="cbg17" x1="0" y1="0" x2="0" y2="1"><stop offset="0" stop-color="#f3f3f3"/><stop offset="1" stop-color="#e2e2e2"/></linearGradient><linearGradient id="ckg17" x1="0" y1="0" x2="0" y2="1"><stop offset="0" stop-color="#9be05a"/><stop offset="0.45" stop-color="#5cb812"/><stop offset="1" stop-color="#3d9a08"/></linearGradient></defs><rect x="0.65" y="0.65" width="15.7" height="15.7" fill="url(#cbg17)" stroke="#b2b2b2" stroke-width="1.3"/><path d="M1,6.9 L3.5,4.5 L7.4,7.8 L13.8,2.4 L16,4.2 L7.3,13.7Z" fill="url(#ckg17)" stroke="url(#ckg17)" stroke-width="0.5" stroke-linejoin="round"/></svg>
<svg style="position:absolute;left:128.0px;top:483.4px;" width="18" height="14.8" viewBox="0 0 18.7 15.5"><rect x="6.5" y="0" width="5.8" height="4.9" rx="0.5" fill="#41799f"/><rect x="0" y="10.3" width="5.4" height="5.2" rx="0.5" fill="#41799f"/><rect x="6.65" y="10.3" width="5.4" height="5.2" rx="0.5" fill="#41799f"/><rect x="13.3" y="10.3" width="5.4" height="5.2" rx="0.5" fill="#41799f"/><path d="M9.35,4.5 V10.6 M2.7,10.6 V7.6 H16 V10.6" fill="none" stroke="#41799f" stroke-width="1.1"/></svg>
<span class="t" style="left:152.02px;top:483px;font-size:17.5px;font-weight:400;color:#111;transform:scaleX(0.9899);transform-origin:0 0;">Toàn quyền đơn mua hàng</span>
<svg style="position:absolute;left:86.09999999999991px;top:512.5px;" width="11.9" height="6.9" viewBox="0 0 11.9 6.9"><path d="M0,0 H11.9 L5.95,6.9Z" fill="#a8a8a8"/></svg>
<svg style="position:absolute;left:106.09999999999991px;top:509.29999999999995px;" width="17" height="17" viewBox="0 0 17 17"><defs><linearGradient id="cbg18" x1="0" y1="0" x2="0" y2="1"><stop offset="0" stop-color="#f3f3f3"/><stop offset="1" stop-color="#e2e2e2"/></linearGradient><linearGradient id="ckg18" x1="0" y1="0" x2="0" y2="1"><stop offset="0" stop-color="#9be05a"/><stop offset="0.45" stop-color="#5cb812"/><stop offset="1" stop-color="#3d9a08"/></linearGradient></defs><rect x="0.65" y="0.65" width="15.7" height="15.7" fill="url(#cbg18)" stroke="#b2b2b2" stroke-width="1.3"/><path d="M1,6.9 L3.5,4.5 L7.4,7.8 L13.8,2.4 L16,4.2 L7.3,13.7Z" fill="url(#ckg18)" stroke="url(#ckg18)" stroke-width="0.5" stroke-linejoin="round"/></svg>
<svg style="position:absolute;left:128.4px;top:509.9px;" width="14" height="15.6" viewBox="0 0 14 15.6"><path d="M3.2,4.5 L4.3,0.9 Q4.9,0.2 5.8,0.7 L7,1.3 L8.2,0.7 Q9.1,0.2 9.7,0.9 L10.8,4.5Z" fill="#41799f"/><rect x="0.6" y="4.1" width="12.8" height="1.6" rx="0.8" fill="#41799f"/><path d="M3.2,5.6 H10.8 V8 Q10.8,10.8 7,10.8 Q3.2,10.8 3.2,8Z" fill="#41799f"/><rect x="4.3" y="6.7" width="2" height="1" fill="#fff"/><rect x="7.7" y="6.7" width="2" height="1" fill="#fff"/><path d="M2.6,9.5 Q0.2,10.6 0.2,14 Q0.2,15.6 1.8,15.6 H12.2 Q13.8,15.6 13.8,14 Q13.8,10.6 11.4,9.5 L7,10.8Z" fill="#41799f"/><path d="M5.1,10.8 L6.1,14.8 M8.9,10.8 L7.9,14.8" stroke="#fff" stroke-width="0.9" fill="none"/></svg>
<span class="t" style="left:151.59px;top:510px;font-size:17.5px;font-weight:400;color:#111;transform:scaleX(0.9887);transform-origin:0 0;">Quản trị đơn mua hàng</span>
<svg style="position:absolute;left:86.09999999999991px;top:540.0px;" width="11.9" height="6.9" viewBox="0 0 11.9 6.9"><path d="M0,0 H11.9 L5.95,6.9Z" fill="#a8a8a8"/></svg>
<svg style="position:absolute;left:106.09999999999991px;top:536.8px;" width="17" height="17" viewBox="0 0 17 17"><defs><linearGradient id="cbg19" x1="0" y1="0" x2="0" y2="1"><stop offset="0" stop-color="#f3f3f3"/><stop offset="1" stop-color="#e2e2e2"/></linearGradient><linearGradient id="ckg19" x1="0" y1="0" x2="0" y2="1"><stop offset="0" stop-color="#9be05a"/><stop offset="0.45" stop-color="#5cb812"/><stop offset="1" stop-color="#3d9a08"/></linearGradient></defs><rect x="0.65" y="0.65" width="15.7" height="15.7" fill="url(#cbg19)" stroke="#b2b2b2" stroke-width="1.3"/><path d="M1,6.9 L3.5,4.5 L7.4,7.8 L13.8,2.4 L16,4.2 L7.3,13.7Z" fill="url(#ckg19)" stroke="url(#ckg19)" stroke-width="0.5" stroke-linejoin="round"/></svg>
<svg style="position:absolute;left:129.0px;top:536.3px;" width="16" height="19" viewBox="0 0 15 18"><path d="M4.2,9.2 V2.2 Q4.2,0.7 5.5,0.7 Q6.8,0.7 6.8,2.2 V7 Q7.4,6.3 8.4,6.5 Q9.2,6.7 9.4,7.4 Q10,6.9 10.9,7.2 Q11.6,7.5 11.8,8.2 Q12.6,7.9 13.3,8.5 Q13.9,9 13.9,10 V12.4 Q13.9,14 13.2,15.4 V17.3 H6 V15.6 Q4.6,14.6 3.4,12.6 Q2.4,11 1.4,10.2 Q0.9,9.4 1.6,8.8 Q2.6,8.2 4.2,9.2Z" fill="#fff" stroke="#41799f" stroke-width="1.1" stroke-linejoin="round"/><path d="M7.6,11.4 V14.6 M9.6,11.4 V14.6 M11.6,11.4 V14.6" stroke="#41799f" stroke-width="0.9" fill="none"/></svg>
<span class="t" style="left:152.02px;top:538px;font-size:17.5px;font-weight:400;color:#111;transform:scaleX(0.9874);transform-origin:0 0;">Truy cập đơn mua hàng</span>
<svg style="position:absolute;left:86.09999999999991px;top:567.5px;" width="11.9" height="6.9" viewBox="0 0 11.9 6.9"><path d="M0,0 H11.9 L5.95,6.9Z" fill="#a8a8a8"/></svg>
<svg style="position:absolute;left:106.09999999999991px;top:564.3px;" width="17" height="17" viewBox="0 0 17 17"><defs><linearGradient id="cbg20" x1="0" y1="0" x2="0" y2="1"><stop offset="0" stop-color="#f3f3f3"/><stop offset="1" stop-color="#e2e2e2"/></linearGradient><linearGradient id="ckg20" x1="0" y1="0" x2="0" y2="1"><stop offset="0" stop-color="#9be05a"/><stop offset="0.45" stop-color="#5cb812"/><stop offset="1" stop-color="#3d9a08"/></linearGradient></defs><rect x="0.65" y="0.65" width="15.7" height="15.7" fill="url(#cbg20)" stroke="#b2b2b2" stroke-width="1.3"/><path d="M1,6.9 L3.5,4.5 L7.4,7.8 L13.8,2.4 L16,4.2 L7.3,13.7Z" fill="url(#ckg20)" stroke="url(#ckg20)" stroke-width="0.5" stroke-linejoin="round"/></svg>
<svg style="position:absolute;left:129.4px;top:566.1999999999999px;" width="13" height="13" viewBox="0 0 13 13"><path d="M4.6,0 H8.4 V4.6 H13 V8.4 H8.4 V13 H4.6 V8.4 H0 V4.6 H4.6Z" fill="#41799f"/></svg>
<span class="t" style="left:152.02px;top:565px;font-size:17.5px;font-weight:400;color:#111;transform:scaleX(0.9918);transform-origin:0 0;">Thêm đơn mua hàng</span>
<svg style="position:absolute;left:86.09999999999991px;top:595.0px;" width="11.9" height="6.9" viewBox="0 0 11.9 6.9"><path d="M0,0 H11.9 L5.95,6.9Z" fill="#a8a8a8"/></svg>
<svg style="position:absolute;left:106.09999999999991px;top:591.8px;" width="17" height="17" viewBox="0 0 17 17"><defs><linearGradient id="cbg21" x1="0" y1="0" x2="0" y2="1"><stop offset="0" stop-color="#f3f3f3"/><stop offset="1" stop-color="#e2e2e2"/></linearGradient><linearGradient id="ckg21" x1="0" y1="0" x2="0" y2="1"><stop offset="0" stop-color="#9be05a"/><stop offset="0.45" stop-color="#5cb812"/><stop offset="1" stop-color="#3d9a08"/></linearGradient></defs><rect x="0.65" y="0.65" width="15.7" height="15.7" fill="url(#cbg21)" stroke="#b2b2b2" stroke-width="1.3"/><path d="M1,6.9 L3.5,4.5 L7.4,7.8 L13.8,2.4 L16,4.2 L7.3,13.7Z" fill="url(#ckg21)" stroke="url(#ckg21)" stroke-width="0.5" stroke-linejoin="round"/></svg>
<svg style="position:absolute;left:128.9px;top:592.9px;" width="17.5" height="15" viewBox="0 0 17.5 15"><path d="M9.8,1 H2.6 Q0.6,1 0.6,3 V11.8 Q0.6,13.8 2.6,13.8 H11 Q13,13.8 13,11.8 V9.6" fill="none" stroke="#41799f" stroke-width="1.1"/><path d="M5.5,10.7 L6.3,7.5 L14.2,0.3 L17,3.1 L8.7,10Z" fill="#41799f"/><path d="M6.1,9.3 L6.9,10.1" stroke="#fff" stroke-width="0.9"/></svg>
<span class="t" style="left:151.63px;top:593px;font-size:17.5px;font-weight:400;color:#111;transform:scaleX(0.9792);transform-origin:0 0;">Sửa đơn mua hàng</span>
<svg style="position:absolute;left:86.09999999999991px;top:622.5px;" width="11.9" height="6.9" viewBox="0 0 11.9 6.9"><path d="M0,0 H11.9 L5.95,6.9Z" fill="#a8a8a8"/></svg>
<svg style="position:absolute;left:106.09999999999991px;top:619.3px;" width="17" height="17" viewBox="0 0 17 17"><defs><linearGradient id="cbg22" x1="0" y1="0" x2="0" y2="1"><stop offset="0" stop-color="#f3f3f3"/><stop offset="1" stop-color="#e2e2e2"/></linearGradient><linearGradient id="ckg22" x1="0" y1="0" x2="0" y2="1"><stop offset="0" stop-color="#9be05a"/><stop offset="0.45" stop-color="#5cb812"/><stop offset="1" stop-color="#3d9a08"/></linearGradient></defs><rect x="0.65" y="0.65" width="15.7" height="15.7" fill="url(#cbg22)" stroke="#b2b2b2" stroke-width="1.3"/><path d="M1,6.9 L3.5,4.5 L7.4,7.8 L13.8,2.4 L16,4.2 L7.3,13.7Z" fill="url(#ckg22)" stroke="url(#ckg22)" stroke-width="0.5" stroke-linejoin="round"/></svg>
<svg style="position:absolute;left:129.2px;top:620.1999999999999px;" width="12.6" height="15.2" viewBox="0 0 12.6 15.2"><path d="M0,3.2 H12.6 M3.6,3.2 V1.4 Q3.6,0.6 4.4,0.6 H8.2 Q9,0.6 9,1.4 V3.2" fill="none" stroke="#41799f" stroke-width="1.1"/><path d="M1.4,3.6 V13.2 Q1.4,14.6 2.8,14.6 H9.8 Q11.2,14.6 11.2,13.2 V3.6" fill="none" stroke="#41799f" stroke-width="1.1"/><path d="M3.5,5.8 V12 M6.1,5.8 V12 M8.7,5.8 V12" stroke="#41799f" stroke-width="0.9" fill="none"/></svg>
<span class="t" style="left:152.02px;top:620px;font-size:17.5px;font-weight:400;color:#111;transform:scaleX(0.9863);transform-origin:0 0;">Xóa đơn mua hàng</span>
<svg style="position:absolute;left:63.200000000000045px;top:650.0px;" width="11.9" height="6.9" viewBox="0 0 11.9 6.9"><path d="M0,0 H11.9 L5.95,6.9Z" fill="#a8a8a8"/></svg>
<svg style="position:absolute;left:83px;top:646.8px;" width="17" height="17" viewBox="0 0 17 17"><defs><linearGradient id="cbg23" x1="0" y1="0" x2="0" y2="1"><stop offset="0" stop-color="#f3f3f3"/><stop offset="1" stop-color="#e2e2e2"/></linearGradient><linearGradient id="ckg23" x1="0" y1="0" x2="0" y2="1"><stop offset="0" stop-color="#9be05a"/><stop offset="0.45" stop-color="#5cb812"/><stop offset="1" stop-color="#3d9a08"/></linearGradient></defs><rect x="0.65" y="0.65" width="15.7" height="15.7" fill="url(#cbg23)" stroke="#b2b2b2" stroke-width="1.3"/><path d="M1,6.9 L3.5,4.5 L7.4,7.8 L13.8,2.4 L16,4.2 L7.3,13.7Z" fill="url(#ckg23)" stroke="url(#ckg23)" stroke-width="0.5" stroke-linejoin="round"/></svg>
<svg style="position:absolute;left:105.00000000000009px;top:646.5px;" width="19.1" height="18.3" viewBox="0 0 19.1 18.3"><rect x="4.65" y="0" width="3.35" height="2.1" fill="#41799f"/><rect x="11.5" y="0" width="3.4" height="2.1" fill="#41799f"/><path d="M2.9,3.4 H7.5 V10.6 H6.7 V17.6 Q6.7,18.3 6,18.3 H1 Q0.3,18.3 0.3,17.6 V12Z" fill="#41799f"/><rect x="8.3" y="3.4" width="2.8" height="6.7" fill="#41799f"/><path d="M12,3.4 H16.5 L18.9,12 V17.6 Q18.9,18.3 18.2,18.3 H13.4 Q12.7,18.3 12.7,17.6 V10.6 H12Z" fill="#41799f"/></svg>
<span class="t" style="left:130.20px;top:648px;font-size:17.5px;font-weight:400;color:#111;transform:scaleX(0.9782);transform-origin:0 0;">Quản lý đơn đặt bán</span>
</div>
<div class="b" style="left:1134px;top:871px;width:68px;height:39px;background:#4fb99b"></div>
<svg style="position:absolute;left:1147px;top:883.4px;" width="13" height="13" viewBox="0 0 13 13"><path d="M1.4,0.7 H9.6 L12.3,3.4 V11 Q12.3,12.3 11,12.3 H2 Q0.7,12.3 0.7,11 V1.4 Q0.7,0.7 1.4,0.7Z" fill="none" stroke="#fff" stroke-width="1.3"/><path d="M3.2,0.8 V4.4 H8.6 V0.8 M2.8,12.2 V7.6 H10.2 V12.2" fill="none" stroke="#fff" stroke-width="1.2"/></svg>
<span class="t" style="left:1163.27px;top:882px;font-size:15px;font-weight:400;color:#fff;letter-spacing:0.094px;">Lưu</span>
<svg style="position:absolute;left:0;top:0;pointer-events:none" width="1920" height="935" viewBox="0 0 1920 935"><rect x="1.5" y="120.0" width="284.5" height="50.900000000000006" rx="2.2" fill="none" stroke="#fe0000" stroke-width="4"/><rect x="1.5" y="204.3" width="284.5" height="42.29999999999998" rx="2.2" fill="none" stroke="#fe0000" stroke-width="4"/><rect x="319.9" y="597.6999999999999" width="754.2" height="90.1000000000001" rx="2.2" fill="none" stroke="#fe0000" stroke-width="3.8"/><rect x="1122.7" y="126.8" width="108.79999999999987" height="59.800000000000004" rx="2.2" fill="none" stroke="#fe0000" stroke-width="3.6"/><rect x="1123.1000000000001" y="196.9" width="127.7" height="662.8000000000001" rx="2.2" fill="none" stroke="#fe0000" stroke-width="3.8"/><rect x="1133.9" y="871.1" width="67.99999999999996" height="38.7" rx="2.2" fill="none" stroke="#fe0000" stroke-width="3.8"/><path d="M1204.4,889.4 L1228.8,876.6 L1228.8,902.6Z" fill="#fe0000" stroke="#fe0000" stroke-width="2" stroke-linejoin="round"/><path d="M1226,889.8 L1306.4,888.6" stroke="#fe0000" stroke-width="4.4" stroke-linecap="round" fill="none"/></svg>
</body></html>
